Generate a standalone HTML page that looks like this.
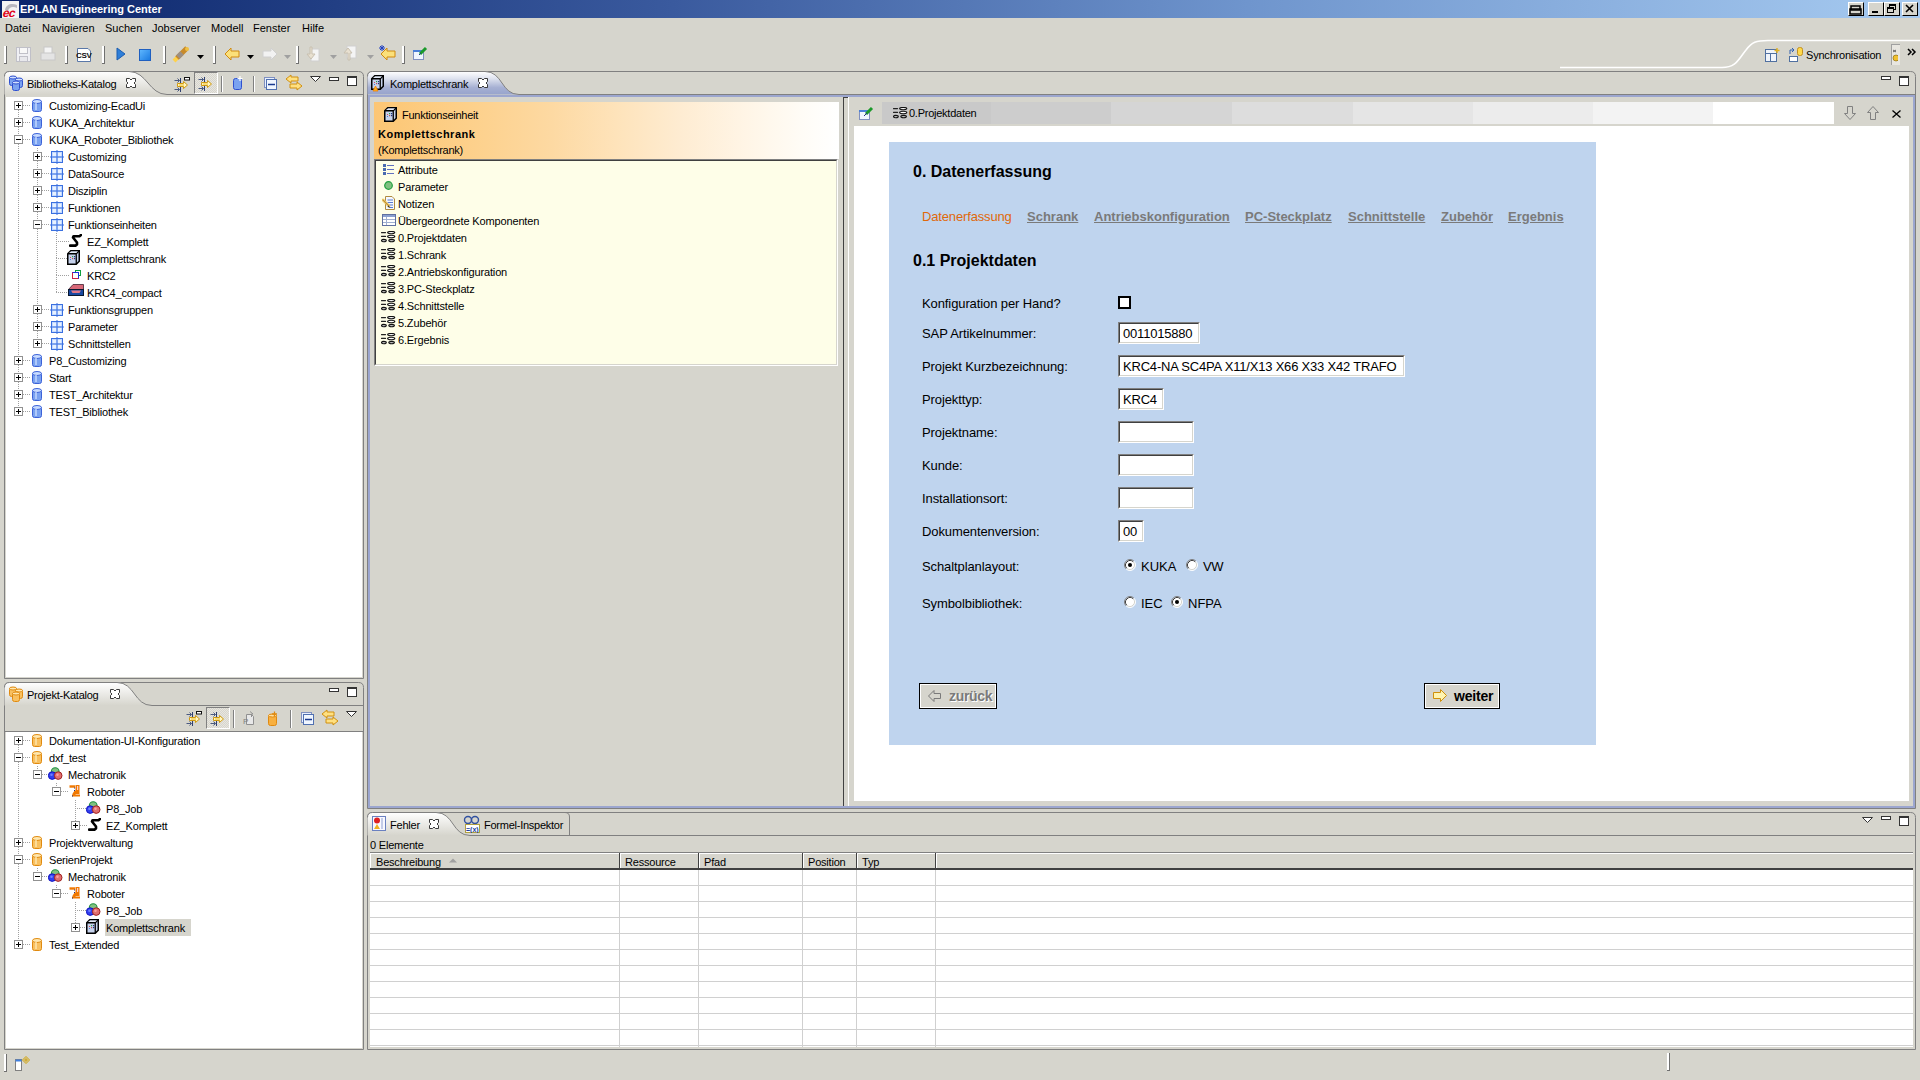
<!DOCTYPE html><html><head><meta charset="utf-8"><style>html,body{margin:0;padding:0;width:1920px;height:1080px;overflow:hidden;background:#d6d5cd;}body{position:relative;font-family:"Liberation Sans",sans-serif;}body>div,body>svg{position:absolute;}.t{white-space:pre;}</style></head><body><div style="left:0px;top:0px;width:1920px;height:18px;background:linear-gradient(to right,#0a246a 0%,#3a5a9e 35%,#6f95cd 65%,#a6caf0 100%)"></div>
<svg style="left:2px;top:1px" width="17" height="17" viewBox="0 0 17 17"><rect x="0" y="0" width="17" height="17" fill="#f4f4f4"/><path d="M3 9 C4 3 10 2 15 4 L15 7 C11 5 7 6 6 10 Z" fill="#b8b8c0"/><g transform="translate(2 0) skewX(-14)"><text x="2" y="16" font-family="Liberation Sans" font-weight="700" font-size="12" fill="#e00018" letter-spacing="-0.6">ec</text></g></svg>
<div class="t" style="left:20px;top:4px;font-size:11px;line-height:11px;color:#fff;font-weight:700;">EPLAN Engineering Center</div>
<div style="left:1848px;top:2px;width:16px;height:14px;background:#d6d5cd;border-top:1px solid #fff;border-left:1px solid #fff;border-right:1px solid #000;border-bottom:1px solid #000;box-sizing:border-box"></div>
<svg style="left:1848px;top:2px" width="16" height="14" viewBox="0 0 16 14"><rect x="3" y="4" width="9" height="4" fill="none" stroke="#000" stroke-width="1.5"/><rect x="2" y="7" width="11" height="5" fill="none" stroke="#000" stroke-width="1.5"/></svg>
<div style="left:1868px;top:2px;width:16px;height:14px;background:#d6d5cd;border-top:1px solid #fff;border-left:1px solid #fff;border-right:1px solid #000;border-bottom:1px solid #000;box-sizing:border-box"></div>
<svg style="left:1868px;top:2px" width="16" height="14" viewBox="0 0 16 14"><rect x="4" y="9" width="6" height="2" fill="#000"/></svg>
<div style="left:1884px;top:2px;width:16px;height:14px;background:#d6d5cd;border-top:1px solid #fff;border-left:1px solid #fff;border-right:1px solid #000;border-bottom:1px solid #000;box-sizing:border-box"></div>
<svg style="left:1884px;top:2px" width="16" height="14" viewBox="0 0 16 14"><rect x="5.5" y="2.5" width="6" height="5" fill="none" stroke="#000"/><rect x="5" y="2" width="7" height="2" fill="#000"/><rect x="3.5" y="5.5" width="6" height="5" fill="#d6d5cd" stroke="#000"/><rect x="3" y="5" width="7" height="2" fill="#000"/></svg>
<div style="left:1902px;top:2px;width:16px;height:14px;background:#d6d5cd;border-top:1px solid #fff;border-left:1px solid #fff;border-right:1px solid #000;border-bottom:1px solid #000;box-sizing:border-box"></div>
<svg style="left:1902px;top:2px" width="16" height="14" viewBox="0 0 16 14"><path d="M4 3 L11 10 M11 3 L4 10" stroke="#000" stroke-width="1.6"/></svg>
<div class="t" style="left:5px;top:23px;font-size:11px;line-height:11px;color:#000;font-weight:400;">Datei</div>
<div class="t" style="left:42px;top:23px;font-size:11px;line-height:11px;color:#000;font-weight:400;">Navigieren</div>
<div class="t" style="left:105px;top:23px;font-size:11px;line-height:11px;color:#000;font-weight:400;">Suchen</div>
<div class="t" style="left:152px;top:23px;font-size:11px;line-height:11px;color:#000;font-weight:400;">Jobserver</div>
<div class="t" style="left:211px;top:23px;font-size:11px;line-height:11px;color:#000;font-weight:400;">Modell</div>
<div class="t" style="left:253px;top:23px;font-size:11px;line-height:11px;color:#000;font-weight:400;">Fenster</div>
<div class="t" style="left:302px;top:23px;font-size:11px;line-height:11px;color:#000;font-weight:400;">Hilfe</div>
<div style="left:4px;top:46px;width:2px;height:18px;background:#fff"></div>
<div style="left:6px;top:46px;width:1px;height:18px;background:#707070"></div>
<div style="left:4px;top:63px;width:3px;height:1px;background:#707070"></div>
<div style="left:65px;top:46px;width:2px;height:18px;background:#fff"></div>
<div style="left:67px;top:46px;width:1px;height:18px;background:#707070"></div>
<div style="left:65px;top:63px;width:3px;height:1px;background:#707070"></div>
<div style="left:102px;top:46px;width:2px;height:18px;background:#fff"></div>
<div style="left:104px;top:46px;width:1px;height:18px;background:#707070"></div>
<div style="left:102px;top:63px;width:3px;height:1px;background:#707070"></div>
<div style="left:163px;top:46px;width:2px;height:18px;background:#fff"></div>
<div style="left:165px;top:46px;width:1px;height:18px;background:#707070"></div>
<div style="left:163px;top:63px;width:3px;height:1px;background:#707070"></div>
<div style="left:213px;top:46px;width:2px;height:18px;background:#fff"></div>
<div style="left:215px;top:46px;width:1px;height:18px;background:#707070"></div>
<div style="left:213px;top:63px;width:3px;height:1px;background:#707070"></div>
<div style="left:296px;top:46px;width:2px;height:18px;background:#fff"></div>
<div style="left:298px;top:46px;width:1px;height:18px;background:#707070"></div>
<div style="left:296px;top:63px;width:3px;height:1px;background:#707070"></div>
<div style="left:402px;top:46px;width:2px;height:18px;background:#fff"></div>
<div style="left:404px;top:46px;width:1px;height:18px;background:#707070"></div>
<div style="left:402px;top:63px;width:3px;height:1px;background:#707070"></div>
<svg style="left:16px;top:47px" width="15" height="15" viewBox="0 0 15 15"><rect x="0.5" y="0.5" width="14" height="14" fill="#f0f0f4" stroke="#c0c0c8"/><rect x="3.5" y="0.5" width="8" height="6" fill="#f8f8f8" stroke="#c0c0c8"/><rect x="3.5" y="9.5" width="8" height="5" fill="#e8e8ec" stroke="#c0c0c8"/></svg>
<svg style="left:40px;top:46px" width="16" height="16" viewBox="0 0 16 16"><rect x="4" y="1" width="8" height="7" fill="#f4f4f4" stroke="#c8c8c8"/><rect x="1" y="7" width="14" height="7" fill="#e4e4e4" stroke="#c8c8c8"/></svg>
<svg style="left:75px;top:46px" width="18" height="17" viewBox="0 0 18 17"><path d="M2.5 2.5 H13 L15.5 5 V15.5 H2.5 Z" fill="#fff" stroke="#5a78a8"/><text x="1" y="12" font-family="Liberation Sans" font-size="8" font-weight="700" fill="#101010" letter-spacing="-0.3">CSV</text></svg>
<svg style="left:115px;top:46px" width="12" height="16" viewBox="0 0 12 16"><path d="M2 2 L10 8 L2 14 Z" fill="#2f7fd8" stroke="#1a5cb0"/></svg>
<svg style="left:139px;top:49px" width="12" height="12" viewBox="0 0 12 12"><defs><linearGradient id="stopg" x1="0" y1="0" x2="1" y2="1"><stop offset="0" stop-color="#60b8ff"/><stop offset="1" stop-color="#1878e0"/></linearGradient></defs><rect x="0.5" y="0.5" width="11" height="11" fill="url(#stopg)" stroke="#2060c0"/></svg>
<svg style="left:172px;top:45px" width="20" height="18" viewBox="0 0 20 18"><path d="M2 16 L6 12" stroke="#ffd24a" stroke-width="4"/><path d="M5 13 L15 3" stroke="#c88a2a" stroke-width="5"/><path d="M6 12 L10 8" stroke="#9a8f86" stroke-width="5"/><circle cx="15" cy="4" r="2" fill="#f0c040"/></svg>
<svg style="left:197px;top:55px" width="7" height="4" viewBox="0 0 7 4"><path d="M0 0 L7 0 L3.5 4 Z" fill="#000"/></svg>
<svg style="left:224px;top:47px" width="16" height="14" viewBox="0 0 16 14"><path d="M1 7 L7 1 L7 4 L15 4 L15 10 L7 10 L7 13 Z" fill="#fbe07a" stroke="#d08a10" stroke-linejoin="round"/></svg>
<svg style="left:247px;top:55px" width="7" height="4" viewBox="0 0 7 4"><path d="M0 0 L7 0 L3.5 4 Z" fill="#000"/></svg>
<svg style="left:262px;top:47px" width="16" height="14" viewBox="0 0 16 14"><path d="M15 7 L9 1 L9 4 L1 4 L1 10 L9 10 L9 13 Z" fill="#f2f2f2" stroke="#d0d0d0" stroke-linejoin="round"/></svg>
<svg style="left:284px;top:55px" width="7" height="4" viewBox="0 0 7 4"><path d="M0 0 L7 0 L3.5 4 Z" fill="#a0a0a0"/></svg>
<svg style="left:306px;top:46px" width="14" height="16" viewBox="0 0 14 16"><rect x="5" y="3" width="8" height="12" fill="#f4f4f4" stroke="#d0d0d0"/><path d="M4 1 L4 8 L1 8 L5 13 L9 8 L6 8 L6 1Z" fill="#e8e0d0" stroke="#c8c0b0"/></svg>
<svg style="left:330px;top:55px" width="7" height="4" viewBox="0 0 7 4"><path d="M0 0 L7 0 L3.5 4 Z" fill="#a0a0a0"/></svg>
<svg style="left:343px;top:45px" width="14" height="16" viewBox="0 0 14 16"><rect x="4" y="1" width="9" height="12" fill="#f4f4f4" stroke="#d0d0d0"/><path d="M5 15 L5 8 L1 8 L5 3 L9 8 L7 8 L7 15Z" fill="#e8e0d0" stroke="#c8c0b0"/></svg>
<svg style="left:367px;top:55px" width="7" height="4" viewBox="0 0 7 4"><path d="M0 0 L7 0 L3.5 4 Z" fill="#a0a0a0"/></svg>
<svg style="left:380px;top:47px" width="16" height="14" viewBox="0 0 16 14"><path d="M1 7 L7 1 L7 4 L15 4 L15 10 L7 10 L7 13 Z" fill="#fbe07a" stroke="#d08a10" stroke-linejoin="round"/></svg>
<svg style="left:379px;top:45px" width="6" height="6" viewBox="0 0 6 6"><path d="M3 0 V6 M0 3 H6 M1 1 L5 5 M5 1 L1 5" stroke="#2040c0" stroke-width="1"/></svg>
<svg style="left:412px;top:45px" width="16" height="16" viewBox="0 0 16 16"><rect x="1.5" y="5.5" width="10" height="9" fill="#f0f6ff" stroke="#8090c0"/><rect x="1" y="5" width="11" height="2" fill="#4a80d8"/><path d="M8 9 L14 3" stroke="#1a9a2a" stroke-width="3"/><path d="M7 10 L9 8" stroke="#204080"/></svg>
<svg style="left:1560px;top:36px" width="360" height="36" viewBox="0 0 360 36"><path d="M0 31.5 L162 31.5 C176 31.5 178 24 186 14 C192 6 196 4.5 208 4.5 L360 4.5" fill="none" stroke="#fff" stroke-width="1.6"/></svg>
<svg style="left:1764px;top:47px" width="16" height="16" viewBox="0 0 16 16"><rect x="1.5" y="2.5" width="11" height="12" fill="#f0f4fa" stroke="#5070a0"/><path d="M1.5 6.5 H12.5 M6.5 6.5 V14.5" stroke="#5070a0"/><path d="M13 1 V6 M10.5 3.5 H15.5" stroke="#e0b020" stroke-width="1.4"/></svg>
<svg style="left:1787px;top:46px" width="18" height="17" viewBox="0 0 18 17"><rect x="2.5" y="10.5" width="8" height="5" fill="#fff" stroke="#5070a0"/><path d="M3 8 V4 L7 4 M5 2 L7 4 L5 6" stroke="#3060b0" fill="none"/><rect x="10.5" y="1.5" width="5" height="8" rx="2" fill="#ffd84a" stroke="#c09020"/></svg>
<div class="t" style="left:1806px;top:50px;font-size:11px;line-height:11px;color:#000;font-weight:400;letter-spacing:-0.2px">Synchronisation</div>
<div style="left:1891px;top:44px;width:8px;height:20px;background:#e8e6e0;border-left:1px solid #a0a0a0;border-top:1px solid #a0a0a0"></div>
<svg style="left:1892px;top:48px" width="6" height="14" viewBox="0 0 6 14"><path d="M1 2 L4 4 M1 4 L4 2" stroke="#444" stroke-width="0.8"/><circle cx="4" cy="10" r="3" fill="#f0c030" stroke="#806000" stroke-width="0.6"/></svg>
<svg style="left:1907px;top:48px" width="10" height="8" viewBox="0 0 10 8"><path d="M1 1 L4 4 L1 7 M5 1 L8 4 L5 7" fill="none" stroke="#000" stroke-width="1.5"/></svg>
<!--panels-->
<svg style="left:4px;top:71px" width="360" height="608" viewBox="0 0 360 608"><defs><linearGradient id="g1" x1="0" y1="0" x2="0" y2="1"><stop offset="0" stop-color="#ffffff"/><stop offset="1" stop-color="#d6d5cd"/></linearGradient></defs><path d="M0.5 607.5 L0.5 5.5 Q0.5 0.5 5.5 0.5 L354.5 0.5 Q359.5 0.5 359.5 5.5 L359.5 607.5 Z" fill="#d6d5cd" stroke="#808080"/><path d="M0.5 23.5 L0.5 5.5 Q0.5 0.5 5.5 0.5 L125 0.5 C143 0.5 145 23.5 163 23.5 Z" fill="url(#g1)"/><path d="M0.5 5.5 Q0.5 0.5 5.5 0.5 L125 0.5 C143 0.5 145 23.5 163 23.5 L359.5 23.5" fill="none" stroke="#808080"/></svg>
<div style="left:6px;top:97px;width:356px;height:580px;background:#fff"></div>
<svg style="left:4px;top:682px" width="360" height="368" viewBox="0 0 360 368"><defs><linearGradient id="g2" x1="0" y1="0" x2="0" y2="1"><stop offset="0" stop-color="#ffffff"/><stop offset="1" stop-color="#d6d5cd"/></linearGradient></defs><path d="M0.5 367.5 L0.5 5.5 Q0.5 0.5 5.5 0.5 L354.5 0.5 Q359.5 0.5 359.5 5.5 L359.5 367.5 Z" fill="#d6d5cd" stroke="#808080"/><path d="M0.5 23.5 L0.5 5.5 Q0.5 0.5 5.5 0.5 L113 0.5 C131 0.5 130 23.5 148 23.5 Z" fill="url(#g2)"/><path d="M0.5 5.5 Q0.5 0.5 5.5 0.5 L113 0.5 C131 0.5 130 23.5 148 23.5 L359.5 23.5" fill="none" stroke="#808080"/></svg>
<div style="left:5px;top:731px;width:358px;height:1px;background:#808080"></div>
<div style="left:6px;top:732px;width:356px;height:316px;background:#fff"></div>
<svg style="left:367px;top:71px" width="1549" height="738" viewBox="0 0 1549 738"><defs><linearGradient id="g3" x1="0" y1="0" x2="0" y2="1"><stop offset="0" stop-color="#ffffff"/><stop offset="0.3" stop-color="#dfe3ef"/><stop offset="0.7" stop-color="#a6b0d3"/><stop offset="1" stop-color="#98a4cc"/></linearGradient></defs><path d="M0.5 737.5 L0.5 5.5 Q0.5 0.5 5.5 0.5 L1543.5 0.5 Q1548.5 0.5 1548.5 5.5 L1548.5 737.5 Z" fill="#d6d5cd" stroke="#808080"/><path d="M0.5 23.5 L0.5 5.5 Q0.5 0.5 5.5 0.5 L118 0.5 C136 0.5 134 23.5 152 23.5 Z" fill="url(#g3)"/><path d="M0.5 5.5 Q0.5 0.5 5.5 0.5 L118 0.5 C136 0.5 134 23.5 152 23.5 L1548.5 23.5" fill="none" stroke="#808080"/></svg>
<svg style="left:367px;top:812px" width="1549" height="238" viewBox="0 0 1549 238"><defs><linearGradient id="g4" x1="0" y1="0" x2="0" y2="1"><stop offset="0" stop-color="#ffffff"/><stop offset="1" stop-color="#d6d5cd"/></linearGradient></defs><path d="M0.5 237.5 L0.5 5.5 Q0.5 0.5 5.5 0.5 L1543.5 0.5 Q1548.5 0.5 1548.5 5.5 L1548.5 237.5 Z" fill="#d6d5cd" stroke="#808080"/><path d="M0.5 23.5 L0.5 5.5 Q0.5 0.5 5.5 0.5 L69 0.5 C87 0.5 85 23.5 103 23.5 Z" fill="url(#g4)"/><path d="M0.5 5.5 Q0.5 0.5 5.5 0.5 L69 0.5 C87 0.5 85 23.5 103 23.5 L1548.5 23.5" fill="none" stroke="#808080"/></svg>
<div style="left:23px;top:105px;width:8px;height:1px;background:repeating-linear-gradient(to right,#a0a0a0 0 1px,transparent 1px 2px)"></div>
<div style="left:18px;top:110px;width:1px;height:8px;background:repeating-linear-gradient(to bottom,#a0a0a0 0 1px,transparent 1px 2px)"></div>
<div style="left:14px;top:101px;width:9px;height:9px;box-sizing:border-box;border:1px solid #919191;background:#fff"></div>
<div style="left:16px;top:105px;width:5px;height:1px;background:#000"></div>
<div style="left:18px;top:103px;width:1px;height:5px;background:#000"></div>
<svg style="left:32px;top:99px" width="10" height="13" viewBox="0 0 10 13"><rect x="0.5" y="1.5" width="9" height="11" rx="2" fill="#7aa2f0" stroke="#3c62d8"/><ellipse cx="5" cy="2.5" rx="4.5" ry="2" fill="#c8dcff" stroke="#3c62d8"/><rect x="3" y="4" width="2" height="7" fill="#c8dcff" opacity="0.7"/></svg>
<div class="t" style="left:49px;top:101px;font-size:11px;line-height:11px;color:#000;font-weight:400;letter-spacing:-0.2px">Customizing-EcadUi</div>
<div style="left:23px;top:122px;width:8px;height:1px;background:repeating-linear-gradient(to right,#a0a0a0 0 1px,transparent 1px 2px)"></div>
<div style="left:18px;top:127px;width:1px;height:8px;background:repeating-linear-gradient(to bottom,#a0a0a0 0 1px,transparent 1px 2px)"></div>
<div style="left:14px;top:118px;width:9px;height:9px;box-sizing:border-box;border:1px solid #919191;background:#fff"></div>
<div style="left:16px;top:122px;width:5px;height:1px;background:#000"></div>
<div style="left:18px;top:120px;width:1px;height:5px;background:#000"></div>
<svg style="left:32px;top:116px" width="10" height="13" viewBox="0 0 10 13"><rect x="0.5" y="1.5" width="9" height="11" rx="2" fill="#7aa2f0" stroke="#3c62d8"/><ellipse cx="5" cy="2.5" rx="4.5" ry="2" fill="#c8dcff" stroke="#3c62d8"/><rect x="3" y="4" width="2" height="7" fill="#c8dcff" opacity="0.7"/></svg>
<div class="t" style="left:49px;top:118px;font-size:11px;line-height:11px;color:#000;font-weight:400;letter-spacing:-0.2px">KUKA_Architektur</div>
<div style="left:23px;top:139px;width:8px;height:1px;background:repeating-linear-gradient(to right,#a0a0a0 0 1px,transparent 1px 2px)"></div>
<div style="left:18px;top:144px;width:1px;height:212px;background:repeating-linear-gradient(to bottom,#a0a0a0 0 1px,transparent 1px 2px)"></div>
<div style="left:14px;top:135px;width:9px;height:9px;box-sizing:border-box;border:1px solid #919191;background:#fff"></div>
<div style="left:16px;top:139px;width:5px;height:1px;background:#000"></div>
<svg style="left:32px;top:133px" width="10" height="13" viewBox="0 0 10 13"><rect x="0.5" y="1.5" width="9" height="11" rx="2" fill="#7aa2f0" stroke="#3c62d8"/><ellipse cx="5" cy="2.5" rx="4.5" ry="2" fill="#c8dcff" stroke="#3c62d8"/><rect x="3" y="4" width="2" height="7" fill="#c8dcff" opacity="0.7"/></svg>
<div class="t" style="left:49px;top:135px;font-size:11px;line-height:11px;color:#000;font-weight:400;letter-spacing:-0.2px">KUKA_Roboter_Bibliothek</div>
<div style="left:42px;top:156px;width:8px;height:1px;background:repeating-linear-gradient(to right,#a0a0a0 0 1px,transparent 1px 2px)"></div>
<div style="left:37px;top:161px;width:1px;height:8px;background:repeating-linear-gradient(to bottom,#a0a0a0 0 1px,transparent 1px 2px)"></div>
<div style="left:37px;top:148px;width:1px;height:4px;background:repeating-linear-gradient(to bottom,#a0a0a0 0 1px,transparent 1px 2px)"></div>
<div style="left:33px;top:152px;width:9px;height:9px;box-sizing:border-box;border:1px solid #919191;background:#fff"></div>
<div style="left:35px;top:156px;width:5px;height:1px;background:#000"></div>
<div style="left:37px;top:154px;width:1px;height:5px;background:#000"></div>
<svg style="left:50px;top:150px" width="14" height="14" viewBox="0 0 14 14"><rect x="1.5" y="1.5" width="11" height="11" fill="#c4daff" stroke="#3a70e0"/><rect x="3" y="3" width="3" height="3" fill="#e8f2ff"/><rect x="8" y="3" width="3" height="3" fill="#e8f2ff"/><rect x="3" y="8" width="3" height="3" fill="#e8f2ff"/><rect x="8" y="8" width="3" height="3" fill="#e8f2ff"/><path d="M7 0 V14 M0 7 H14" stroke="#3a70e0"/></svg>
<div class="t" style="left:68px;top:152px;font-size:11px;line-height:11px;color:#000;font-weight:400;letter-spacing:-0.2px">Customizing</div>
<div style="left:42px;top:173px;width:8px;height:1px;background:repeating-linear-gradient(to right,#a0a0a0 0 1px,transparent 1px 2px)"></div>
<div style="left:37px;top:178px;width:1px;height:8px;background:repeating-linear-gradient(to bottom,#a0a0a0 0 1px,transparent 1px 2px)"></div>
<div style="left:33px;top:169px;width:9px;height:9px;box-sizing:border-box;border:1px solid #919191;background:#fff"></div>
<div style="left:35px;top:173px;width:5px;height:1px;background:#000"></div>
<div style="left:37px;top:171px;width:1px;height:5px;background:#000"></div>
<svg style="left:50px;top:167px" width="14" height="14" viewBox="0 0 14 14"><rect x="1.5" y="1.5" width="11" height="11" fill="#c4daff" stroke="#3a70e0"/><rect x="3" y="3" width="3" height="3" fill="#e8f2ff"/><rect x="8" y="3" width="3" height="3" fill="#e8f2ff"/><rect x="3" y="8" width="3" height="3" fill="#e8f2ff"/><rect x="8" y="8" width="3" height="3" fill="#e8f2ff"/><path d="M7 0 V14 M0 7 H14" stroke="#3a70e0"/></svg>
<div class="t" style="left:68px;top:169px;font-size:11px;line-height:11px;color:#000;font-weight:400;letter-spacing:-0.2px">DataSource</div>
<div style="left:42px;top:190px;width:8px;height:1px;background:repeating-linear-gradient(to right,#a0a0a0 0 1px,transparent 1px 2px)"></div>
<div style="left:37px;top:195px;width:1px;height:8px;background:repeating-linear-gradient(to bottom,#a0a0a0 0 1px,transparent 1px 2px)"></div>
<div style="left:33px;top:186px;width:9px;height:9px;box-sizing:border-box;border:1px solid #919191;background:#fff"></div>
<div style="left:35px;top:190px;width:5px;height:1px;background:#000"></div>
<div style="left:37px;top:188px;width:1px;height:5px;background:#000"></div>
<svg style="left:50px;top:184px" width="14" height="14" viewBox="0 0 14 14"><rect x="1.5" y="1.5" width="11" height="11" fill="#c4daff" stroke="#3a70e0"/><rect x="3" y="3" width="3" height="3" fill="#e8f2ff"/><rect x="8" y="3" width="3" height="3" fill="#e8f2ff"/><rect x="3" y="8" width="3" height="3" fill="#e8f2ff"/><rect x="8" y="8" width="3" height="3" fill="#e8f2ff"/><path d="M7 0 V14 M0 7 H14" stroke="#3a70e0"/></svg>
<div class="t" style="left:68px;top:186px;font-size:11px;line-height:11px;color:#000;font-weight:400;letter-spacing:-0.2px">Disziplin</div>
<div style="left:42px;top:207px;width:8px;height:1px;background:repeating-linear-gradient(to right,#a0a0a0 0 1px,transparent 1px 2px)"></div>
<div style="left:37px;top:212px;width:1px;height:8px;background:repeating-linear-gradient(to bottom,#a0a0a0 0 1px,transparent 1px 2px)"></div>
<div style="left:33px;top:203px;width:9px;height:9px;box-sizing:border-box;border:1px solid #919191;background:#fff"></div>
<div style="left:35px;top:207px;width:5px;height:1px;background:#000"></div>
<div style="left:37px;top:205px;width:1px;height:5px;background:#000"></div>
<svg style="left:50px;top:201px" width="14" height="14" viewBox="0 0 14 14"><rect x="1.5" y="1.5" width="11" height="11" fill="#c4daff" stroke="#3a70e0"/><rect x="3" y="3" width="3" height="3" fill="#e8f2ff"/><rect x="8" y="3" width="3" height="3" fill="#e8f2ff"/><rect x="3" y="8" width="3" height="3" fill="#e8f2ff"/><rect x="8" y="8" width="3" height="3" fill="#e8f2ff"/><path d="M7 0 V14 M0 7 H14" stroke="#3a70e0"/></svg>
<div class="t" style="left:68px;top:203px;font-size:11px;line-height:11px;color:#000;font-weight:400;letter-spacing:-0.2px">Funktionen</div>
<div style="left:42px;top:224px;width:8px;height:1px;background:repeating-linear-gradient(to right,#a0a0a0 0 1px,transparent 1px 2px)"></div>
<div style="left:37px;top:229px;width:1px;height:76px;background:repeating-linear-gradient(to bottom,#a0a0a0 0 1px,transparent 1px 2px)"></div>
<div style="left:33px;top:220px;width:9px;height:9px;box-sizing:border-box;border:1px solid #919191;background:#fff"></div>
<div style="left:35px;top:224px;width:5px;height:1px;background:#000"></div>
<svg style="left:50px;top:218px" width="14" height="14" viewBox="0 0 14 14"><rect x="1.5" y="1.5" width="11" height="11" fill="#c4daff" stroke="#3a70e0"/><rect x="3" y="3" width="3" height="3" fill="#e8f2ff"/><rect x="8" y="3" width="3" height="3" fill="#e8f2ff"/><rect x="3" y="8" width="3" height="3" fill="#e8f2ff"/><rect x="8" y="8" width="3" height="3" fill="#e8f2ff"/><path d="M7 0 V14 M0 7 H14" stroke="#3a70e0"/></svg>
<div class="t" style="left:68px;top:220px;font-size:11px;line-height:11px;color:#000;font-weight:400;letter-spacing:-0.2px">Funktionseinheiten</div>
<div style="left:56px;top:241px;width:13px;height:1px;background:repeating-linear-gradient(to right,#a0a0a0 0 1px,transparent 1px 2px)"></div>
<div style="left:56px;top:241px;width:1px;height:18px;background:repeating-linear-gradient(to bottom,#a0a0a0 0 1px,transparent 1px 2px)"></div>
<div style="left:56px;top:233px;width:1px;height:9px;background:repeating-linear-gradient(to bottom,#a0a0a0 0 1px,transparent 1px 2px)"></div>
<svg style="left:69px;top:234px" width="13" height="13" viewBox="0 0 13 13"><path d="M12 1 L10.5 2.2 L4.5 2.2 L4 3.5 L8 8.5 L8 10.5 L6.5 11.6 L1 11.6" fill="none" stroke="#000" stroke-width="2.6" stroke-linejoin="round" stroke-linecap="round"/></svg>
<div class="t" style="left:87px;top:237px;font-size:11px;line-height:11px;color:#000;font-weight:400;letter-spacing:-0.2px">EZ_Komplett</div>
<div style="left:56px;top:258px;width:13px;height:1px;background:repeating-linear-gradient(to right,#a0a0a0 0 1px,transparent 1px 2px)"></div>
<div style="left:56px;top:258px;width:1px;height:18px;background:repeating-linear-gradient(to bottom,#a0a0a0 0 1px,transparent 1px 2px)"></div>
<svg style="left:67px;top:250px" width="13" height="15" viewBox="0 0 13 15"><path d="M0.75 3.75 L3.75 0.75 L12.25 0.75 L12.25 11.25 L9.25 14.25 L0.75 14.25 Z" fill="#c6d2ec" stroke="#000" stroke-width="1.5"/><path d="M1 3.75 L9.25 3.75 L12 1 M9.25 3.75 L9.25 14" fill="none" stroke="#000" stroke-width="1.3"/><path d="M2 2.9 L4 1.5 L11 1.5 L9 2.9 Z" fill="#e4ecf8"/><rect x="3" y="7" width="1" height="1" fill="#d05050"/><rect x="5" y="6" width="1.2" height="1.2" fill="#30a040"/><rect x="7" y="6" width="1.2" height="1.2" fill="#203080"/><rect x="3" y="9" width="1" height="1" fill="#5080d0"/><rect x="5" y="8" width="1.2" height="1.2" fill="#c05050"/><rect x="7" y="8" width="1.2" height="1.2" fill="#203080"/></svg>
<div class="t" style="left:87px;top:254px;font-size:11px;line-height:11px;color:#000;font-weight:400;letter-spacing:-0.2px">Komplettschrank</div>
<div style="left:56px;top:275px;width:13px;height:1px;background:repeating-linear-gradient(to right,#a0a0a0 0 1px,transparent 1px 2px)"></div>
<div style="left:56px;top:275px;width:1px;height:18px;background:repeating-linear-gradient(to bottom,#a0a0a0 0 1px,transparent 1px 2px)"></div>
<svg style="left:72px;top:270px" width="9" height="9" viewBox="0 0 9 9"><rect x="3.5" y="0.5" width="5" height="5" fill="none" stroke="#10a040"/><rect x="0.5" y="2.5" width="6" height="6" fill="#fff" stroke="#2030e0"/><path d="M0.5 2.5 V8.5 H6.5" fill="none" stroke="#d02040"/></svg>
<div class="t" style="left:87px;top:271px;font-size:11px;line-height:11px;color:#000;font-weight:400;letter-spacing:-0.2px">KRC2</div>
<div style="left:56px;top:292px;width:13px;height:1px;background:repeating-linear-gradient(to right,#a0a0a0 0 1px,transparent 1px 2px)"></div>
<svg style="left:68px;top:284px" width="16" height="12" viewBox="0 0 16 12"><path d="M0.5 5.5 L5 0.5 L15.5 0.5 L15.5 5.5 Z" fill="#d86878" stroke="#402030" stroke-width="0.8"/><rect x="0.5" y="5.5" width="15" height="6" fill="#1848a0" stroke="#081830"/><path d="M3 6.5 L13 6.5 L11.5 9 L4.5 9 Z" fill="#e07888"/></svg>
<div class="t" style="left:87px;top:288px;font-size:11px;line-height:11px;color:#000;font-weight:400;letter-spacing:-0.2px">KRC4_compact</div>
<div style="left:42px;top:309px;width:8px;height:1px;background:repeating-linear-gradient(to right,#a0a0a0 0 1px,transparent 1px 2px)"></div>
<div style="left:37px;top:314px;width:1px;height:8px;background:repeating-linear-gradient(to bottom,#a0a0a0 0 1px,transparent 1px 2px)"></div>
<div style="left:33px;top:305px;width:9px;height:9px;box-sizing:border-box;border:1px solid #919191;background:#fff"></div>
<div style="left:35px;top:309px;width:5px;height:1px;background:#000"></div>
<div style="left:37px;top:307px;width:1px;height:5px;background:#000"></div>
<svg style="left:50px;top:303px" width="14" height="14" viewBox="0 0 14 14"><rect x="1.5" y="1.5" width="11" height="11" fill="#c4daff" stroke="#3a70e0"/><rect x="3" y="3" width="3" height="3" fill="#e8f2ff"/><rect x="8" y="3" width="3" height="3" fill="#e8f2ff"/><rect x="3" y="8" width="3" height="3" fill="#e8f2ff"/><rect x="8" y="8" width="3" height="3" fill="#e8f2ff"/><path d="M7 0 V14 M0 7 H14" stroke="#3a70e0"/></svg>
<div class="t" style="left:68px;top:305px;font-size:11px;line-height:11px;color:#000;font-weight:400;letter-spacing:-0.2px">Funktionsgruppen</div>
<div style="left:42px;top:326px;width:8px;height:1px;background:repeating-linear-gradient(to right,#a0a0a0 0 1px,transparent 1px 2px)"></div>
<div style="left:37px;top:331px;width:1px;height:8px;background:repeating-linear-gradient(to bottom,#a0a0a0 0 1px,transparent 1px 2px)"></div>
<div style="left:33px;top:322px;width:9px;height:9px;box-sizing:border-box;border:1px solid #919191;background:#fff"></div>
<div style="left:35px;top:326px;width:5px;height:1px;background:#000"></div>
<div style="left:37px;top:324px;width:1px;height:5px;background:#000"></div>
<svg style="left:50px;top:320px" width="14" height="14" viewBox="0 0 14 14"><rect x="1.5" y="1.5" width="11" height="11" fill="#c4daff" stroke="#3a70e0"/><rect x="3" y="3" width="3" height="3" fill="#e8f2ff"/><rect x="8" y="3" width="3" height="3" fill="#e8f2ff"/><rect x="3" y="8" width="3" height="3" fill="#e8f2ff"/><rect x="8" y="8" width="3" height="3" fill="#e8f2ff"/><path d="M7 0 V14 M0 7 H14" stroke="#3a70e0"/></svg>
<div class="t" style="left:68px;top:322px;font-size:11px;line-height:11px;color:#000;font-weight:400;letter-spacing:-0.2px">Parameter</div>
<div style="left:42px;top:343px;width:8px;height:1px;background:repeating-linear-gradient(to right,#a0a0a0 0 1px,transparent 1px 2px)"></div>
<div style="left:33px;top:339px;width:9px;height:9px;box-sizing:border-box;border:1px solid #919191;background:#fff"></div>
<div style="left:35px;top:343px;width:5px;height:1px;background:#000"></div>
<div style="left:37px;top:341px;width:1px;height:5px;background:#000"></div>
<svg style="left:50px;top:337px" width="14" height="14" viewBox="0 0 14 14"><rect x="1.5" y="1.5" width="11" height="11" fill="#c4daff" stroke="#3a70e0"/><rect x="3" y="3" width="3" height="3" fill="#e8f2ff"/><rect x="8" y="3" width="3" height="3" fill="#e8f2ff"/><rect x="3" y="8" width="3" height="3" fill="#e8f2ff"/><rect x="8" y="8" width="3" height="3" fill="#e8f2ff"/><path d="M7 0 V14 M0 7 H14" stroke="#3a70e0"/></svg>
<div class="t" style="left:68px;top:339px;font-size:11px;line-height:11px;color:#000;font-weight:400;letter-spacing:-0.2px">Schnittstellen</div>
<div style="left:23px;top:360px;width:8px;height:1px;background:repeating-linear-gradient(to right,#a0a0a0 0 1px,transparent 1px 2px)"></div>
<div style="left:18px;top:365px;width:1px;height:8px;background:repeating-linear-gradient(to bottom,#a0a0a0 0 1px,transparent 1px 2px)"></div>
<div style="left:14px;top:356px;width:9px;height:9px;box-sizing:border-box;border:1px solid #919191;background:#fff"></div>
<div style="left:16px;top:360px;width:5px;height:1px;background:#000"></div>
<div style="left:18px;top:358px;width:1px;height:5px;background:#000"></div>
<svg style="left:32px;top:354px" width="10" height="13" viewBox="0 0 10 13"><rect x="0.5" y="1.5" width="9" height="11" rx="2" fill="#7aa2f0" stroke="#3c62d8"/><ellipse cx="5" cy="2.5" rx="4.5" ry="2" fill="#c8dcff" stroke="#3c62d8"/><rect x="3" y="4" width="2" height="7" fill="#c8dcff" opacity="0.7"/></svg>
<div class="t" style="left:49px;top:356px;font-size:11px;line-height:11px;color:#000;font-weight:400;letter-spacing:-0.2px">P8_Customizing</div>
<div style="left:23px;top:377px;width:8px;height:1px;background:repeating-linear-gradient(to right,#a0a0a0 0 1px,transparent 1px 2px)"></div>
<div style="left:18px;top:382px;width:1px;height:8px;background:repeating-linear-gradient(to bottom,#a0a0a0 0 1px,transparent 1px 2px)"></div>
<div style="left:14px;top:373px;width:9px;height:9px;box-sizing:border-box;border:1px solid #919191;background:#fff"></div>
<div style="left:16px;top:377px;width:5px;height:1px;background:#000"></div>
<div style="left:18px;top:375px;width:1px;height:5px;background:#000"></div>
<svg style="left:32px;top:371px" width="10" height="13" viewBox="0 0 10 13"><rect x="0.5" y="1.5" width="9" height="11" rx="2" fill="#7aa2f0" stroke="#3c62d8"/><ellipse cx="5" cy="2.5" rx="4.5" ry="2" fill="#c8dcff" stroke="#3c62d8"/><rect x="3" y="4" width="2" height="7" fill="#c8dcff" opacity="0.7"/></svg>
<div class="t" style="left:49px;top:373px;font-size:11px;line-height:11px;color:#000;font-weight:400;letter-spacing:-0.2px">Start</div>
<div style="left:23px;top:394px;width:8px;height:1px;background:repeating-linear-gradient(to right,#a0a0a0 0 1px,transparent 1px 2px)"></div>
<div style="left:18px;top:399px;width:1px;height:8px;background:repeating-linear-gradient(to bottom,#a0a0a0 0 1px,transparent 1px 2px)"></div>
<div style="left:14px;top:390px;width:9px;height:9px;box-sizing:border-box;border:1px solid #919191;background:#fff"></div>
<div style="left:16px;top:394px;width:5px;height:1px;background:#000"></div>
<div style="left:18px;top:392px;width:1px;height:5px;background:#000"></div>
<svg style="left:32px;top:388px" width="10" height="13" viewBox="0 0 10 13"><rect x="0.5" y="1.5" width="9" height="11" rx="2" fill="#7aa2f0" stroke="#3c62d8"/><ellipse cx="5" cy="2.5" rx="4.5" ry="2" fill="#c8dcff" stroke="#3c62d8"/><rect x="3" y="4" width="2" height="7" fill="#c8dcff" opacity="0.7"/></svg>
<div class="t" style="left:49px;top:390px;font-size:11px;line-height:11px;color:#000;font-weight:400;letter-spacing:-0.2px">TEST_Architektur</div>
<div style="left:23px;top:411px;width:8px;height:1px;background:repeating-linear-gradient(to right,#a0a0a0 0 1px,transparent 1px 2px)"></div>
<div style="left:14px;top:407px;width:9px;height:9px;box-sizing:border-box;border:1px solid #919191;background:#fff"></div>
<div style="left:16px;top:411px;width:5px;height:1px;background:#000"></div>
<div style="left:18px;top:409px;width:1px;height:5px;background:#000"></div>
<svg style="left:32px;top:405px" width="10" height="13" viewBox="0 0 10 13"><rect x="0.5" y="1.5" width="9" height="11" rx="2" fill="#7aa2f0" stroke="#3c62d8"/><ellipse cx="5" cy="2.5" rx="4.5" ry="2" fill="#c8dcff" stroke="#3c62d8"/><rect x="3" y="4" width="2" height="7" fill="#c8dcff" opacity="0.7"/></svg>
<div class="t" style="left:49px;top:407px;font-size:11px;line-height:11px;color:#000;font-weight:400;letter-spacing:-0.2px">TEST_Bibliothek</div>
<div style="left:23px;top:740px;width:8px;height:1px;background:repeating-linear-gradient(to right,#a0a0a0 0 1px,transparent 1px 2px)"></div>
<div style="left:18px;top:745px;width:1px;height:8px;background:repeating-linear-gradient(to bottom,#a0a0a0 0 1px,transparent 1px 2px)"></div>
<div style="left:14px;top:736px;width:9px;height:9px;box-sizing:border-box;border:1px solid #919191;background:#fff"></div>
<div style="left:16px;top:740px;width:5px;height:1px;background:#000"></div>
<div style="left:18px;top:738px;width:1px;height:5px;background:#000"></div>
<svg style="left:32px;top:734px" width="10" height="13" viewBox="0 0 10 13"><rect x="0.5" y="1.5" width="9" height="11" rx="2" fill="#f8c060" stroke="#e08a10"/><ellipse cx="5" cy="2.5" rx="4.5" ry="2" fill="#ffe8b0" stroke="#e08a10"/><rect x="3" y="4" width="2" height="7" fill="#ffe8b0" opacity="0.7"/></svg>
<div class="t" style="left:49px;top:736px;font-size:11px;line-height:11px;color:#000;font-weight:400;letter-spacing:-0.2px">Dokumentation-UI-Konfiguration</div>
<div style="left:23px;top:757px;width:8px;height:1px;background:repeating-linear-gradient(to right,#a0a0a0 0 1px,transparent 1px 2px)"></div>
<div style="left:18px;top:762px;width:1px;height:76px;background:repeating-linear-gradient(to bottom,#a0a0a0 0 1px,transparent 1px 2px)"></div>
<div style="left:14px;top:753px;width:9px;height:9px;box-sizing:border-box;border:1px solid #919191;background:#fff"></div>
<div style="left:16px;top:757px;width:5px;height:1px;background:#000"></div>
<svg style="left:32px;top:751px" width="10" height="13" viewBox="0 0 10 13"><rect x="0.5" y="1.5" width="9" height="11" rx="2" fill="#f8c060" stroke="#e08a10"/><ellipse cx="5" cy="2.5" rx="4.5" ry="2" fill="#ffe8b0" stroke="#e08a10"/><rect x="3" y="4" width="2" height="7" fill="#ffe8b0" opacity="0.7"/></svg>
<div class="t" style="left:49px;top:753px;font-size:11px;line-height:11px;color:#000;font-weight:400;letter-spacing:-0.2px">dxf_test</div>
<div style="left:42px;top:774px;width:8px;height:1px;background:repeating-linear-gradient(to right,#a0a0a0 0 1px,transparent 1px 2px)"></div>
<div style="left:37px;top:766px;width:1px;height:4px;background:repeating-linear-gradient(to bottom,#a0a0a0 0 1px,transparent 1px 2px)"></div>
<div style="left:33px;top:770px;width:9px;height:9px;box-sizing:border-box;border:1px solid #919191;background:#fff"></div>
<div style="left:35px;top:774px;width:5px;height:1px;background:#000"></div>
<svg style="left:48px;top:767px" width="15" height="13" viewBox="0 0 15 13"><circle cx="7.2" cy="4.6" r="3.9" fill="#80c080" stroke="#209040" stroke-width="1.1"/><circle cx="4.2" cy="8.6" r="3.8" fill="#3040f0" stroke="#1010c0" stroke-width="1"/><circle cx="10.2" cy="8.6" r="3.8" fill="#e07070" stroke="#a02020" stroke-width="1"/><circle cx="3.5" cy="7.8" r="1.3" fill="#7080ff"/><circle cx="9.5" cy="7.8" r="1.2" fill="#ffa0a0"/></svg>
<div class="t" style="left:68px;top:770px;font-size:11px;line-height:11px;color:#000;font-weight:400;letter-spacing:-0.2px">Mechatronik</div>
<div style="left:61px;top:791px;width:8px;height:1px;background:repeating-linear-gradient(to right,#a0a0a0 0 1px,transparent 1px 2px)"></div>
<div style="left:56px;top:783px;width:1px;height:4px;background:repeating-linear-gradient(to bottom,#a0a0a0 0 1px,transparent 1px 2px)"></div>
<div style="left:52px;top:787px;width:9px;height:9px;box-sizing:border-box;border:1px solid #919191;background:#fff"></div>
<div style="left:54px;top:791px;width:5px;height:1px;background:#000"></div>
<svg style="left:69px;top:785px" width="12" height="12" viewBox="0 0 12 12"><path d="M0.5 1.5 H6" stroke="#f07800" stroke-width="2.4"/><rect x="6.5" y="0" width="4" height="9" fill="#f07800"/><rect x="8" y="1" width="1.2" height="4" fill="#ffd0d0"/><path d="M7 6 L4.5 10" stroke="#f07800" stroke-width="3"/><rect x="3" y="9.5" width="8" height="2" fill="#f07800"/><rect x="5" y="2.5" width="1" height="1" fill="#203080"/><rect x="5" y="5" width="1" height="1" fill="#203080"/><rect x="3" y="10.5" width="1" height="1" fill="#203080"/></svg>
<div class="t" style="left:87px;top:787px;font-size:11px;line-height:11px;color:#000;font-weight:400;letter-spacing:-0.2px">Roboter</div>
<div style="left:75px;top:808px;width:13px;height:1px;background:repeating-linear-gradient(to right,#a0a0a0 0 1px,transparent 1px 2px)"></div>
<div style="left:75px;top:808px;width:1px;height:13px;background:repeating-linear-gradient(to bottom,#a0a0a0 0 1px,transparent 1px 2px)"></div>
<div style="left:75px;top:800px;width:1px;height:9px;background:repeating-linear-gradient(to bottom,#a0a0a0 0 1px,transparent 1px 2px)"></div>
<svg style="left:86px;top:801px" width="15" height="13" viewBox="0 0 15 13"><circle cx="7.2" cy="4.6" r="3.9" fill="#80c080" stroke="#209040" stroke-width="1.1"/><circle cx="4.2" cy="8.6" r="3.8" fill="#3040f0" stroke="#1010c0" stroke-width="1"/><circle cx="10.2" cy="8.6" r="3.8" fill="#e07070" stroke="#a02020" stroke-width="1"/><circle cx="3.5" cy="7.8" r="1.3" fill="#7080ff"/><circle cx="9.5" cy="7.8" r="1.2" fill="#ffa0a0"/></svg>
<div class="t" style="left:106px;top:804px;font-size:11px;line-height:11px;color:#000;font-weight:400;letter-spacing:-0.2px">P8_Job</div>
<div style="left:80px;top:825px;width:8px;height:1px;background:repeating-linear-gradient(to right,#a0a0a0 0 1px,transparent 1px 2px)"></div>
<div style="left:71px;top:821px;width:9px;height:9px;box-sizing:border-box;border:1px solid #919191;background:#fff"></div>
<div style="left:73px;top:825px;width:5px;height:1px;background:#000"></div>
<div style="left:75px;top:823px;width:1px;height:5px;background:#000"></div>
<svg style="left:88px;top:818px" width="13" height="13" viewBox="0 0 13 13"><path d="M12 1 L10.5 2.2 L4.5 2.2 L4 3.5 L8 8.5 L8 10.5 L6.5 11.6 L1 11.6" fill="none" stroke="#000" stroke-width="2.6" stroke-linejoin="round" stroke-linecap="round"/></svg>
<div class="t" style="left:106px;top:821px;font-size:11px;line-height:11px;color:#000;font-weight:400;letter-spacing:-0.2px">EZ_Komplett</div>
<div style="left:23px;top:842px;width:8px;height:1px;background:repeating-linear-gradient(to right,#a0a0a0 0 1px,transparent 1px 2px)"></div>
<div style="left:18px;top:847px;width:1px;height:8px;background:repeating-linear-gradient(to bottom,#a0a0a0 0 1px,transparent 1px 2px)"></div>
<div style="left:14px;top:838px;width:9px;height:9px;box-sizing:border-box;border:1px solid #919191;background:#fff"></div>
<div style="left:16px;top:842px;width:5px;height:1px;background:#000"></div>
<div style="left:18px;top:840px;width:1px;height:5px;background:#000"></div>
<svg style="left:32px;top:836px" width="10" height="13" viewBox="0 0 10 13"><rect x="0.5" y="1.5" width="9" height="11" rx="2" fill="#f8c060" stroke="#e08a10"/><ellipse cx="5" cy="2.5" rx="4.5" ry="2" fill="#ffe8b0" stroke="#e08a10"/><rect x="3" y="4" width="2" height="7" fill="#ffe8b0" opacity="0.7"/></svg>
<div class="t" style="left:49px;top:838px;font-size:11px;line-height:11px;color:#000;font-weight:400;letter-spacing:-0.2px">Projektverwaltung</div>
<div style="left:23px;top:859px;width:8px;height:1px;background:repeating-linear-gradient(to right,#a0a0a0 0 1px,transparent 1px 2px)"></div>
<div style="left:18px;top:864px;width:1px;height:76px;background:repeating-linear-gradient(to bottom,#a0a0a0 0 1px,transparent 1px 2px)"></div>
<div style="left:14px;top:855px;width:9px;height:9px;box-sizing:border-box;border:1px solid #919191;background:#fff"></div>
<div style="left:16px;top:859px;width:5px;height:1px;background:#000"></div>
<svg style="left:32px;top:853px" width="10" height="13" viewBox="0 0 10 13"><rect x="0.5" y="1.5" width="9" height="11" rx="2" fill="#f8c060" stroke="#e08a10"/><ellipse cx="5" cy="2.5" rx="4.5" ry="2" fill="#ffe8b0" stroke="#e08a10"/><rect x="3" y="4" width="2" height="7" fill="#ffe8b0" opacity="0.7"/></svg>
<div class="t" style="left:49px;top:855px;font-size:11px;line-height:11px;color:#000;font-weight:400;letter-spacing:-0.2px">SerienProjekt</div>
<div style="left:42px;top:876px;width:8px;height:1px;background:repeating-linear-gradient(to right,#a0a0a0 0 1px,transparent 1px 2px)"></div>
<div style="left:37px;top:868px;width:1px;height:4px;background:repeating-linear-gradient(to bottom,#a0a0a0 0 1px,transparent 1px 2px)"></div>
<div style="left:33px;top:872px;width:9px;height:9px;box-sizing:border-box;border:1px solid #919191;background:#fff"></div>
<div style="left:35px;top:876px;width:5px;height:1px;background:#000"></div>
<svg style="left:48px;top:869px" width="15" height="13" viewBox="0 0 15 13"><circle cx="7.2" cy="4.6" r="3.9" fill="#80c080" stroke="#209040" stroke-width="1.1"/><circle cx="4.2" cy="8.6" r="3.8" fill="#3040f0" stroke="#1010c0" stroke-width="1"/><circle cx="10.2" cy="8.6" r="3.8" fill="#e07070" stroke="#a02020" stroke-width="1"/><circle cx="3.5" cy="7.8" r="1.3" fill="#7080ff"/><circle cx="9.5" cy="7.8" r="1.2" fill="#ffa0a0"/></svg>
<div class="t" style="left:68px;top:872px;font-size:11px;line-height:11px;color:#000;font-weight:400;letter-spacing:-0.2px">Mechatronik</div>
<div style="left:61px;top:893px;width:8px;height:1px;background:repeating-linear-gradient(to right,#a0a0a0 0 1px,transparent 1px 2px)"></div>
<div style="left:56px;top:885px;width:1px;height:4px;background:repeating-linear-gradient(to bottom,#a0a0a0 0 1px,transparent 1px 2px)"></div>
<div style="left:52px;top:889px;width:9px;height:9px;box-sizing:border-box;border:1px solid #919191;background:#fff"></div>
<div style="left:54px;top:893px;width:5px;height:1px;background:#000"></div>
<svg style="left:69px;top:887px" width="12" height="12" viewBox="0 0 12 12"><path d="M0.5 1.5 H6" stroke="#f07800" stroke-width="2.4"/><rect x="6.5" y="0" width="4" height="9" fill="#f07800"/><rect x="8" y="1" width="1.2" height="4" fill="#ffd0d0"/><path d="M7 6 L4.5 10" stroke="#f07800" stroke-width="3"/><rect x="3" y="9.5" width="8" height="2" fill="#f07800"/><rect x="5" y="2.5" width="1" height="1" fill="#203080"/><rect x="5" y="5" width="1" height="1" fill="#203080"/><rect x="3" y="10.5" width="1" height="1" fill="#203080"/></svg>
<div class="t" style="left:87px;top:889px;font-size:11px;line-height:11px;color:#000;font-weight:400;letter-spacing:-0.2px">Roboter</div>
<div style="left:75px;top:910px;width:13px;height:1px;background:repeating-linear-gradient(to right,#a0a0a0 0 1px,transparent 1px 2px)"></div>
<div style="left:75px;top:910px;width:1px;height:13px;background:repeating-linear-gradient(to bottom,#a0a0a0 0 1px,transparent 1px 2px)"></div>
<div style="left:75px;top:902px;width:1px;height:9px;background:repeating-linear-gradient(to bottom,#a0a0a0 0 1px,transparent 1px 2px)"></div>
<svg style="left:86px;top:903px" width="15" height="13" viewBox="0 0 15 13"><circle cx="7.2" cy="4.6" r="3.9" fill="#80c080" stroke="#209040" stroke-width="1.1"/><circle cx="4.2" cy="8.6" r="3.8" fill="#3040f0" stroke="#1010c0" stroke-width="1"/><circle cx="10.2" cy="8.6" r="3.8" fill="#e07070" stroke="#a02020" stroke-width="1"/><circle cx="3.5" cy="7.8" r="1.3" fill="#7080ff"/><circle cx="9.5" cy="7.8" r="1.2" fill="#ffa0a0"/></svg>
<div class="t" style="left:106px;top:906px;font-size:11px;line-height:11px;color:#000;font-weight:400;letter-spacing:-0.2px">P8_Job</div>
<div style="left:80px;top:927px;width:8px;height:1px;background:repeating-linear-gradient(to right,#a0a0a0 0 1px,transparent 1px 2px)"></div>
<div style="left:71px;top:923px;width:9px;height:9px;box-sizing:border-box;border:1px solid #919191;background:#fff"></div>
<div style="left:73px;top:927px;width:5px;height:1px;background:#000"></div>
<div style="left:75px;top:925px;width:1px;height:5px;background:#000"></div>
<svg style="left:86px;top:919px" width="13" height="15" viewBox="0 0 13 15"><path d="M0.75 3.75 L3.75 0.75 L12.25 0.75 L12.25 11.25 L9.25 14.25 L0.75 14.25 Z" fill="#c6d2ec" stroke="#000" stroke-width="1.5"/><path d="M1 3.75 L9.25 3.75 L12 1 M9.25 3.75 L9.25 14" fill="none" stroke="#000" stroke-width="1.3"/><path d="M2 2.9 L4 1.5 L11 1.5 L9 2.9 Z" fill="#e4ecf8"/><rect x="3" y="7" width="1" height="1" fill="#d05050"/><rect x="5" y="6" width="1.2" height="1.2" fill="#30a040"/><rect x="7" y="6" width="1.2" height="1.2" fill="#203080"/><rect x="3" y="9" width="1" height="1" fill="#5080d0"/><rect x="5" y="8" width="1.2" height="1.2" fill="#c05050"/><rect x="7" y="8" width="1.2" height="1.2" fill="#203080"/></svg>
<div style="left:105px;top:919px;width:86px;height:17px;background:#d6d5cd"></div>
<div class="t" style="left:106px;top:923px;font-size:11px;line-height:11px;color:#000;font-weight:400;letter-spacing:-0.2px">Komplettschrank</div>
<div style="left:23px;top:944px;width:8px;height:1px;background:repeating-linear-gradient(to right,#a0a0a0 0 1px,transparent 1px 2px)"></div>
<div style="left:14px;top:940px;width:9px;height:9px;box-sizing:border-box;border:1px solid #919191;background:#fff"></div>
<div style="left:16px;top:944px;width:5px;height:1px;background:#000"></div>
<div style="left:18px;top:942px;width:1px;height:5px;background:#000"></div>
<svg style="left:32px;top:938px" width="10" height="13" viewBox="0 0 10 13"><rect x="0.5" y="1.5" width="9" height="11" rx="2" fill="#f8c060" stroke="#e08a10"/><ellipse cx="5" cy="2.5" rx="4.5" ry="2" fill="#ffe8b0" stroke="#e08a10"/><rect x="3" y="4" width="2" height="7" fill="#ffe8b0" opacity="0.7"/></svg>
<div class="t" style="left:49px;top:940px;font-size:11px;line-height:11px;color:#000;font-weight:400;letter-spacing:-0.2px">Test_Extended</div>
<svg style="left:9px;top:75px" width="15" height="16" viewBox="0 0 15 16"><rect x="0.5" y="1.5" width="7" height="9" rx="2" fill="#7aa2f0" stroke="#2f50d0"/><ellipse cx="4" cy="2.5" rx="3.5" ry="1.5" fill="#d0e0ff" stroke="#2f50d0"/><rect x="6.5" y="3.5" width="7" height="9" rx="2" fill="#7aa2f0" stroke="#2f50d0"/><ellipse cx="10" cy="4.5" rx="3.5" ry="1.5" fill="#d0e0ff" stroke="#2f50d0"/><rect x="3.5" y="6.5" width="7" height="9" rx="2" fill="#7aa2f0" stroke="#2f50d0"/><ellipse cx="7" cy="7.5" rx="3.5" ry="1.5" fill="#d0e0ff" stroke="#2f50d0"/></svg>
<div class="t" style="left:27px;top:79px;font-size:11px;line-height:11px;color:#000;font-weight:400;letter-spacing:-0.25px">Bibliotheks-Katalog</div>
<svg style="left:126px;top:78px" width="11" height="11" viewBox="0 0 11 11"><path d="M0.5 0.5 H3.5 L5 2 L6.5 0.5 H9.5 V3.5 L8 5 L9.5 6.5 V9.5 H6.5 L5 8 L3.5 9.5 H0.5 V6.5 L2 5 L0.5 3.5 Z" fill="#fff" stroke="#303030" stroke-width="0.95" stroke-linejoin="miter"/></svg>
<svg style="left:174px;top:77px" width="17" height="15" viewBox="0 0 17 15"><path d="M0.5 3.5 H5.5 M3.5 1.5 L5.5 3.5 L3.5 5.5 M0.5 12.5 H5.5 M3.5 10.5 L5.5 12.5 L3.5 14.5" stroke="#4a5a80" fill="none"/><path d="M6.5 1 V6 M6.5 10 V15" stroke="#304070"/><path d="M3.5 6.5 H9.5 V4.5 L13.5 8 L9.5 11.5 V9.5 H3.5 Z" fill="#fff6c0" stroke="#d09a10"/><path d="M5 8 H10" stroke="#f0c030"/><rect x="10.5" y="0.5" width="5" height="2.5" fill="#fff" stroke="#111"/></svg>
<div style="left:194px;top:72px;width:24px;height:22px;box-sizing:border-box;border-left:1px solid #808080;border-top:1px solid #808080;border-right:1px solid #fff;border-bottom:1px solid #fff;background:repeating-conic-gradient(#e8e6e0 0 25%,#d6d5cd 0 50%) 0 0/2px 2px"></div>
<svg style="left:198px;top:76px" width="17" height="15" viewBox="0 0 17 15"><path d="M0.5 3.5 H5.5 M3.5 1.5 L5.5 3.5 L3.5 5.5 M0.5 12.5 H5.5 M3.5 10.5 L5.5 12.5 L3.5 14.5" stroke="#4a5a80" fill="none"/><path d="M6.5 1 V6 M6.5 10 V15" stroke="#304070"/><path d="M3.5 6.5 H9.5 V4.5 L13.5 8 L9.5 11.5 V9.5 H3.5 Z" fill="#fff6c0" stroke="#d09a10"/><path d="M5 8 H10" stroke="#f0c030"/></svg>
<div style="left:221px;top:76px;width:1px;height:16px;background:#808080"></div>
<div style="left:222px;top:76px;width:1px;height:16px;background:#fff"></div>
<svg style="left:232px;top:76px" width="12" height="15" viewBox="0 0 12 15"><rect x="1.5" y="2.5" width="8" height="11" rx="2" fill="#7aa2f0" stroke="#2f50d0"/><path d="M8 0 V5 M5.5 2.5 H10.5" stroke="#fff" stroke-width="1.2"/></svg>
<div style="left:253px;top:76px;width:1px;height:16px;background:#808080"></div>
<div style="left:254px;top:76px;width:1px;height:16px;background:#fff"></div>
<svg style="left:263px;top:76px" width="15" height="15" viewBox="0 0 15 15"><rect x="1.5" y="1.5" width="10" height="10" fill="#e8f0ff" stroke="#8090c0"/><rect x="3.5" y="3.5" width="10" height="10" fill="#f0f6ff" stroke="#5070b0"/><path d="M5 8.5 H12" stroke="#1a3a90" stroke-width="1.5"/></svg>
<svg style="left:285px;top:74px" width="18" height="18" viewBox="0 0 18 18"><path d="M1 5 L6 1 V3 H13 V7 H6 V9 Z" fill="#ffe080" stroke="#d09010"/><path d="M17 12 L12 8 V10 H5 V14 H12 V16 Z" fill="#ffe080" stroke="#d09010"/></svg>
<svg style="left:310px;top:76px" width="11" height="6" viewBox="0 0 11 6"><path d="M0.5 0.5 L10.5 0.5 L5.5 5.5 Z" fill="#fff" stroke="#333"/></svg>
<div style="left:329px;top:77px;width:10px;height:4px;box-sizing:border-box;border:1px solid #333;background:#fff"></div>
<div style="left:347px;top:76px;width:10px;height:10px;box-sizing:border-box;border:1px solid #333;border-top-width:2px;background:#fff"></div>
<svg style="left:9px;top:686px" width="15" height="16" viewBox="0 0 15 16"><rect x="0.5" y="1.5" width="7" height="9" rx="2" fill="#f8c060" stroke="#e08a10"/><ellipse cx="4" cy="2.5" rx="3.5" ry="1.5" fill="#ffe8b0" stroke="#e08a10"/><rect x="6.5" y="3.5" width="7" height="9" rx="2" fill="#f8c060" stroke="#e08a10"/><ellipse cx="10" cy="4.5" rx="3.5" ry="1.5" fill="#ffe8b0" stroke="#e08a10"/><rect x="3.5" y="6.5" width="7" height="9" rx="2" fill="#f8c060" stroke="#e08a10"/><ellipse cx="7" cy="7.5" rx="3.5" ry="1.5" fill="#ffe8b0" stroke="#e08a10"/></svg>
<div class="t" style="left:27px;top:690px;font-size:11px;line-height:11px;color:#000;font-weight:400;letter-spacing:-0.25px">Projekt-Katalog</div>
<svg style="left:110px;top:689px" width="11" height="11" viewBox="0 0 11 11"><path d="M0.5 0.5 H3.5 L5 2 L6.5 0.5 H9.5 V3.5 L8 5 L9.5 6.5 V9.5 H6.5 L5 8 L3.5 9.5 H0.5 V6.5 L2 5 L0.5 3.5 Z" fill="#fff" stroke="#303030" stroke-width="0.95" stroke-linejoin="miter"/></svg>
<div style="left:329px;top:688px;width:10px;height:4px;box-sizing:border-box;border:1px solid #333;background:#fff"></div>
<div style="left:347px;top:687px;width:10px;height:10px;box-sizing:border-box;border:1px solid #333;border-top-width:2px;background:#fff"></div>
<svg style="left:186px;top:711px" width="17" height="15" viewBox="0 0 17 15"><path d="M0.5 3.5 H5.5 M3.5 1.5 L5.5 3.5 L3.5 5.5 M0.5 12.5 H5.5 M3.5 10.5 L5.5 12.5 L3.5 14.5" stroke="#4a5a80" fill="none"/><path d="M6.5 1 V6 M6.5 10 V15" stroke="#304070"/><path d="M3.5 6.5 H9.5 V4.5 L13.5 8 L9.5 11.5 V9.5 H3.5 Z" fill="#fff6c0" stroke="#d09a10"/><path d="M5 8 H10" stroke="#f0c030"/><rect x="10.5" y="0.5" width="5" height="2.5" fill="#fff" stroke="#111"/></svg>
<div style="left:206px;top:707px;width:24px;height:22px;box-sizing:border-box;border-left:1px solid #808080;border-top:1px solid #808080;border-right:1px solid #fff;border-bottom:1px solid #fff;background:repeating-conic-gradient(#e8e6e0 0 25%,#d6d5cd 0 50%) 0 0/2px 2px"></div>
<svg style="left:210px;top:711px" width="17" height="15" viewBox="0 0 17 15"><path d="M0.5 3.5 H5.5 M3.5 1.5 L5.5 3.5 L3.5 5.5 M0.5 12.5 H5.5 M3.5 10.5 L5.5 12.5 L3.5 14.5" stroke="#4a5a80" fill="none"/><path d="M6.5 1 V6 M6.5 10 V15" stroke="#304070"/><path d="M3.5 6.5 H9.5 V4.5 L13.5 8 L9.5 11.5 V9.5 H3.5 Z" fill="#fff6c0" stroke="#d09a10"/><path d="M5 8 H10" stroke="#f0c030"/></svg>
<div style="left:233px;top:710px;width:1px;height:18px;background:#808080"></div>
<div style="left:234px;top:710px;width:1px;height:18px;background:#fff"></div>
<svg style="left:242px;top:711px" width="14" height="15" viewBox="0 0 14 15"><path d="M4.5 3.5 L9.5 3.5 L11.5 5.5 L11.5 13.5 L4.5 13.5 Z" fill="#e8e8e8" stroke="#909090"/><path d="M8 0.5 L11 3 L9.5 3 L9.5 6" stroke="#909090" fill="none"/><text x="1" y="13" font-family="Liberation Sans" font-size="8" fill="#808080">P</text></svg>
<svg style="left:267px;top:711px" width="12" height="15" viewBox="0 0 12 15"><rect x="1.5" y="3.5" width="8" height="11" rx="2" fill="#f8b040" stroke="#e08a10"/><ellipse cx="5.5" cy="4.5" rx="4" ry="1.5" fill="#ffe0a0" stroke="#e08a10"/><path d="M7.5 0.5 V5.5 M5 3 H10" stroke="#e08a10" stroke-width="1.3"/></svg>
<div style="left:290px;top:710px;width:1px;height:18px;background:#808080"></div>
<div style="left:291px;top:710px;width:1px;height:18px;background:#fff"></div>
<svg style="left:300px;top:711px" width="15" height="15" viewBox="0 0 15 15"><rect x="1.5" y="1.5" width="10" height="10" fill="#e8f0ff" stroke="#8090c0"/><rect x="3.5" y="3.5" width="10" height="10" fill="#f0f6ff" stroke="#5070b0"/><path d="M5 8.5 H12" stroke="#1a3a90" stroke-width="1.5"/></svg>
<svg style="left:321px;top:709px" width="18" height="18" viewBox="0 0 18 18"><path d="M1 5 L6 1 V3 H13 V7 H6 V9 Z" fill="#ffe080" stroke="#d09010"/><path d="M17 12 L12 8 V10 H5 V14 H12 V16 Z" fill="#ffe080" stroke="#d09010"/></svg>
<svg style="left:346px;top:711px" width="11" height="6" viewBox="0 0 11 6"><path d="M0.5 0.5 L10.5 0.5 L5.5 5.5 Z" fill="#fff" stroke="#333"/></svg>
<div style="left:368px;top:95px;width:1547px;height:2px;background:#9ca6cf"></div>
<div style="left:368px;top:95px;width:2px;height:713px;background:#9ca6cf"></div>
<div style="left:1913px;top:95px;width:2px;height:713px;background:#9ca6cf"></div>
<div style="left:368px;top:806px;width:1547px;height:2px;background:#9ca6cf"></div>
<svg style="left:371px;top:75px" width="16" height="17" viewBox="0 0 16 17"><path d="M0.75 3.75 L3.75 0.75 L12.25 0.75 L12.25 11.25 L9.25 14.25 L0.75 14.25 Z" fill="#c6d2ec" stroke="#000" stroke-width="1.5"/><path d="M1 3.75 L9.25 3.75 L12 1 M9.25 3.75 L9.25 14" fill="none" stroke="#000" stroke-width="1.3"/><path d="M2 2.9 L4 1.5 L11 1.5 L9 2.9 Z" fill="#e4ecf8"/><rect x="3" y="7" width="1" height="1" fill="#d05050"/><rect x="5" y="6" width="1.2" height="1.2" fill="#30a040"/><rect x="7" y="6" width="1.2" height="1.2" fill="#203080"/><rect x="3" y="9" width="1" height="1" fill="#5080d0"/><rect x="5" y="8" width="1.2" height="1.2" fill="#c05050"/><rect x="7" y="8" width="1.2" height="1.2" fill="#203080"/><path d="M2 16 L4.5 11 L7 16 Z" fill="#ffb020" stroke="#f08000" stroke-width="0.8"/></svg>
<div class="t" style="left:390px;top:79px;font-size:11px;line-height:11px;color:#000;font-weight:400;letter-spacing:-0.25px">Komplettschrank</div>
<svg style="left:478px;top:78px" width="11" height="11" viewBox="0 0 11 11"><path d="M0.5 0.5 H3.5 L5 2 L6.5 0.5 H9.5 V3.5 L8 5 L9.5 6.5 V9.5 H6.5 L5 8 L3.5 9.5 H0.5 V6.5 L2 5 L0.5 3.5 Z" fill="#fff" stroke="#303030" stroke-width="0.95" stroke-linejoin="miter"/></svg>
<div style="left:1881px;top:76px;width:10px;height:4px;box-sizing:border-box;border:1px solid #333;background:#fff"></div>
<div style="left:1899px;top:76px;width:10px;height:10px;box-sizing:border-box;border:1px solid #333;border-top-width:2px;background:#fff"></div>
<div style="left:374px;top:102px;width:465px;height:57px;background:linear-gradient(to right,#fcc674 0%,#fdd08a 20%,#fdd9a2 38%,#fee3ba 52%,#feecd2 66%,#fff5e6 80%,#fffcf6 92%,#fff 100%)"></div>
<svg style="left:384px;top:107px" width="13" height="15" viewBox="0 0 13 15"><path d="M0.75 3.75 L3.75 0.75 L12.25 0.75 L12.25 11.25 L9.25 14.25 L0.75 14.25 Z" fill="#c6d2ec" stroke="#000" stroke-width="1.5"/><path d="M1 3.75 L9.25 3.75 L12 1 M9.25 3.75 L9.25 14" fill="none" stroke="#000" stroke-width="1.3"/><path d="M2 2.9 L4 1.5 L11 1.5 L9 2.9 Z" fill="#e4ecf8"/><rect x="3" y="7" width="1" height="1" fill="#d05050"/><rect x="5" y="6" width="1.2" height="1.2" fill="#30a040"/><rect x="7" y="6" width="1.2" height="1.2" fill="#203080"/><rect x="3" y="9" width="1" height="1" fill="#5080d0"/><rect x="5" y="8" width="1.2" height="1.2" fill="#c05050"/><rect x="7" y="8" width="1.2" height="1.2" fill="#203080"/></svg>
<div class="t" style="left:402px;top:110px;font-size:11px;line-height:11px;color:#000;font-weight:400;letter-spacing:-0.25px">Funktionseinheit</div>
<div class="t" style="left:378px;top:129px;font-size:11px;line-height:11px;color:#000;font-weight:700;letter-spacing:0.5px">Komplettschrank</div>
<div class="t" style="left:378px;top:145px;font-size:11px;line-height:11px;color:#000;font-weight:400;letter-spacing:-0.25px">(Komplettschrank)</div>
<div style="left:374px;top:159px;width:464px;height:207px;box-sizing:border-box;border-top:1px solid #808080;border-left:1px solid #808080;border-right:1px solid #fff;border-bottom:1px solid #fff"></div>
<div style="left:375px;top:160px;width:462px;height:205px;box-sizing:border-box;border-top:1px solid #404040;border-left:1px solid #404040;border-right:1px solid #d6d5cd;border-bottom:1px solid #d6d5cd;background:#fefee8"></div>
<svg style="left:383px;top:164px" width="11" height="11" viewBox="0 0 11 11"><rect x="0" y="0" width="3" height="3" fill="#4a6ab0"/><rect x="0" y="4" width="3" height="3" fill="#4a6ab0"/><rect x="0" y="8" width="3" height="3" fill="#4a6ab0"/><path d="M4 1.5 H11 M4 5.5 H11 M4 9.5 H11" stroke="#6070c0"/></svg>
<div class="t" style="left:398px;top:165px;font-size:11px;line-height:11px;color:#000;font-weight:400;letter-spacing:-0.15px">Attribute</div>
<svg style="left:384px;top:181px" width="9" height="9" viewBox="0 0 9 9"><circle cx="4.5" cy="4.5" r="3.8" fill="#80c080" stroke="#20a040" stroke-width="1.2"/></svg>
<div class="t" style="left:398px;top:182px;font-size:11px;line-height:11px;color:#000;font-weight:400;letter-spacing:-0.15px">Parameter</div>
<svg style="left:382px;top:196px" width="14" height="14" viewBox="0 0 14 14"><path d="M3.5 0.5 H10 L12.5 3 V13.5 H3.5 Z" fill="#f4f8ff" stroke="#b08a40"/><path d="M5.5 4 H11 M5.5 6.5 H11 M5.5 9 H11 M7 11.5 H11" stroke="#5a7ad0"/><path d="M1 4 L7 10" stroke="#e8c060" stroke-width="2.6" stroke-linecap="round"/><path d="M1 4 L7 10" stroke="#a07020" stroke-width="0.6"/><path d="M6.5 9.5 L8 11.5 L5.5 11 Z" fill="#303030"/></svg>
<div class="t" style="left:398px;top:199px;font-size:11px;line-height:11px;color:#000;font-weight:400;letter-spacing:-0.15px">Notizen</div>
<svg style="left:382px;top:214px" width="14" height="12" viewBox="0 0 14 12"><rect x="0.5" y="0.5" width="13" height="11" fill="#fff" stroke="#6070a0"/><rect x="1" y="1" width="12" height="2" fill="#8aa0d0"/><path d="M1 5.5 H13 M1 8.5 H13 M4.5 3 V11" stroke="#a0b0d0"/></svg>
<div class="t" style="left:398px;top:216px;font-size:11px;line-height:11px;color:#000;font-weight:400;letter-spacing:-0.15px">&#220;bergeordnete Komponenten</div>
<svg style="left:381px;top:231px" width="15" height="12" viewBox="0 0 15 12"><path d="M0.5 1.6 H4.5 M0.5 5.4 H4.5" stroke="#222" stroke-width="1.3" stroke-linecap="round"/><ellipse cx="2.9" cy="9.6" rx="2.4" ry="1.2" fill="#c0c0c0" stroke="#111" stroke-width="1.1"/><ellipse cx="10.2" cy="1.6" rx="3.6" ry="1.2" fill="#fff" stroke="#111" stroke-width="1.1"/><ellipse cx="10.2" cy="5.5" rx="3.6" ry="1.2" fill="#fff" stroke="#111" stroke-width="1.1"/><ellipse cx="10.6" cy="9.6" rx="2.8" ry="1.2" fill="#c0c0c0" stroke="#111" stroke-width="1.1"/></svg>
<div class="t" style="left:398px;top:233px;font-size:11px;line-height:11px;color:#000;font-weight:400;letter-spacing:-0.15px">0.Projektdaten</div>
<svg style="left:381px;top:248px" width="15" height="12" viewBox="0 0 15 12"><path d="M0.5 1.6 H4.5 M0.5 5.4 H4.5" stroke="#222" stroke-width="1.3" stroke-linecap="round"/><ellipse cx="2.9" cy="9.6" rx="2.4" ry="1.2" fill="#c0c0c0" stroke="#111" stroke-width="1.1"/><ellipse cx="10.2" cy="1.6" rx="3.6" ry="1.2" fill="#fff" stroke="#111" stroke-width="1.1"/><ellipse cx="10.2" cy="5.5" rx="3.6" ry="1.2" fill="#fff" stroke="#111" stroke-width="1.1"/><ellipse cx="10.6" cy="9.6" rx="2.8" ry="1.2" fill="#c0c0c0" stroke="#111" stroke-width="1.1"/></svg>
<div class="t" style="left:398px;top:250px;font-size:11px;line-height:11px;color:#000;font-weight:400;letter-spacing:-0.15px">1.Schrank</div>
<svg style="left:381px;top:265px" width="15" height="12" viewBox="0 0 15 12"><path d="M0.5 1.6 H4.5 M0.5 5.4 H4.5" stroke="#222" stroke-width="1.3" stroke-linecap="round"/><ellipse cx="2.9" cy="9.6" rx="2.4" ry="1.2" fill="#c0c0c0" stroke="#111" stroke-width="1.1"/><ellipse cx="10.2" cy="1.6" rx="3.6" ry="1.2" fill="#fff" stroke="#111" stroke-width="1.1"/><ellipse cx="10.2" cy="5.5" rx="3.6" ry="1.2" fill="#fff" stroke="#111" stroke-width="1.1"/><ellipse cx="10.6" cy="9.6" rx="2.8" ry="1.2" fill="#c0c0c0" stroke="#111" stroke-width="1.1"/></svg>
<div class="t" style="left:398px;top:267px;font-size:11px;line-height:11px;color:#000;font-weight:400;letter-spacing:-0.15px">2.Antriebskonfiguration</div>
<svg style="left:381px;top:282px" width="15" height="12" viewBox="0 0 15 12"><path d="M0.5 1.6 H4.5 M0.5 5.4 H4.5" stroke="#222" stroke-width="1.3" stroke-linecap="round"/><ellipse cx="2.9" cy="9.6" rx="2.4" ry="1.2" fill="#c0c0c0" stroke="#111" stroke-width="1.1"/><ellipse cx="10.2" cy="1.6" rx="3.6" ry="1.2" fill="#fff" stroke="#111" stroke-width="1.1"/><ellipse cx="10.2" cy="5.5" rx="3.6" ry="1.2" fill="#fff" stroke="#111" stroke-width="1.1"/><ellipse cx="10.6" cy="9.6" rx="2.8" ry="1.2" fill="#c0c0c0" stroke="#111" stroke-width="1.1"/></svg>
<div class="t" style="left:398px;top:284px;font-size:11px;line-height:11px;color:#000;font-weight:400;letter-spacing:-0.15px">3.PC-Steckplatz</div>
<svg style="left:381px;top:299px" width="15" height="12" viewBox="0 0 15 12"><path d="M0.5 1.6 H4.5 M0.5 5.4 H4.5" stroke="#222" stroke-width="1.3" stroke-linecap="round"/><ellipse cx="2.9" cy="9.6" rx="2.4" ry="1.2" fill="#c0c0c0" stroke="#111" stroke-width="1.1"/><ellipse cx="10.2" cy="1.6" rx="3.6" ry="1.2" fill="#fff" stroke="#111" stroke-width="1.1"/><ellipse cx="10.2" cy="5.5" rx="3.6" ry="1.2" fill="#fff" stroke="#111" stroke-width="1.1"/><ellipse cx="10.6" cy="9.6" rx="2.8" ry="1.2" fill="#c0c0c0" stroke="#111" stroke-width="1.1"/></svg>
<div class="t" style="left:398px;top:301px;font-size:11px;line-height:11px;color:#000;font-weight:400;letter-spacing:-0.15px">4.Schnittstelle</div>
<svg style="left:381px;top:316px" width="15" height="12" viewBox="0 0 15 12"><path d="M0.5 1.6 H4.5 M0.5 5.4 H4.5" stroke="#222" stroke-width="1.3" stroke-linecap="round"/><ellipse cx="2.9" cy="9.6" rx="2.4" ry="1.2" fill="#c0c0c0" stroke="#111" stroke-width="1.1"/><ellipse cx="10.2" cy="1.6" rx="3.6" ry="1.2" fill="#fff" stroke="#111" stroke-width="1.1"/><ellipse cx="10.2" cy="5.5" rx="3.6" ry="1.2" fill="#fff" stroke="#111" stroke-width="1.1"/><ellipse cx="10.6" cy="9.6" rx="2.8" ry="1.2" fill="#c0c0c0" stroke="#111" stroke-width="1.1"/></svg>
<div class="t" style="left:398px;top:318px;font-size:11px;line-height:11px;color:#000;font-weight:400;letter-spacing:-0.15px">5.Zubeh&#246;r</div>
<svg style="left:381px;top:333px" width="15" height="12" viewBox="0 0 15 12"><path d="M0.5 1.6 H4.5 M0.5 5.4 H4.5" stroke="#222" stroke-width="1.3" stroke-linecap="round"/><ellipse cx="2.9" cy="9.6" rx="2.4" ry="1.2" fill="#c0c0c0" stroke="#111" stroke-width="1.1"/><ellipse cx="10.2" cy="1.6" rx="3.6" ry="1.2" fill="#fff" stroke="#111" stroke-width="1.1"/><ellipse cx="10.2" cy="5.5" rx="3.6" ry="1.2" fill="#fff" stroke="#111" stroke-width="1.1"/><ellipse cx="10.6" cy="9.6" rx="2.8" ry="1.2" fill="#c0c0c0" stroke="#111" stroke-width="1.1"/></svg>
<div class="t" style="left:398px;top:335px;font-size:11px;line-height:11px;color:#000;font-weight:400;letter-spacing:-0.15px">6.Ergebnis</div>
<div style="left:843px;top:97px;width:1px;height:709px;background:#404040"></div>
<div style="left:843px;top:97px;width:5px;height:1px;background:#404040"></div>
<div style="left:848px;top:97px;width:1px;height:709px;background:#ffffff"></div>
<svg style="left:858px;top:106px" width="16" height="15" viewBox="0 0 16 15"><rect x="1.5" y="4.5" width="10" height="9" fill="#f0f6ff" stroke="#8090c0"/><rect x="1" y="4" width="11" height="2" fill="#4a80d8"/><path d="M8 8 L14 2" stroke="#1a9a2a" stroke-width="3"/><path d="M6 10 L9 7" stroke="#203080"/></svg>
<div style="left:882px;top:102px;width:109px;height:22px;background:#c9c9c9"></div>
<div style="left:991px;top:102px;width:120px;height:22px;background:#cdcdcd"></div>
<div style="left:1111px;top:102px;width:121px;height:22px;background:#d5d5d5"></div>
<div style="left:1232px;top:102px;width:121px;height:22px;background:#dddddd"></div>
<div style="left:1353px;top:102px;width:120px;height:22px;background:#e5e5e5"></div>
<div style="left:1473px;top:102px;width:120px;height:22px;background:#ececec"></div>
<div style="left:1593px;top:102px;width:120px;height:22px;background:#f3f3f3"></div>
<div style="left:1713px;top:102px;width:121px;height:22px;background:#ffffff"></div>
<svg style="left:893px;top:107px" width="15" height="12" viewBox="0 0 15 12"><path d="M0.5 1.6 H4.5 M0.5 5.4 H4.5" stroke="#222" stroke-width="1.3" stroke-linecap="round"/><ellipse cx="2.9" cy="9.6" rx="2.4" ry="1.2" fill="#c0c0c0" stroke="#111" stroke-width="1.1"/><ellipse cx="10.2" cy="1.6" rx="3.6" ry="1.2" fill="#fff" stroke="#111" stroke-width="1.1"/><ellipse cx="10.2" cy="5.5" rx="3.6" ry="1.2" fill="#fff" stroke="#111" stroke-width="1.1"/><ellipse cx="10.6" cy="9.6" rx="2.8" ry="1.2" fill="#c0c0c0" stroke="#111" stroke-width="1.1"/></svg>
<div class="t" style="left:909px;top:108px;font-size:11px;line-height:11px;color:#000;font-weight:400;letter-spacing:-0.25px">0.Projektdaten</div>
<svg style="left:1843px;top:105px" width="14" height="16" viewBox="0 0 14 16"><path d="M4.5 1.5 H9.5 V8.5 H12.5 L7 14.5 L1.5 8.5 H4.5 Z" fill="none" stroke="#808080"/></svg>
<svg style="left:1866px;top:105px" width="14" height="16" viewBox="0 0 14 16"><path d="M4.5 14.5 H9.5 V7.5 H12.5 L7 1.5 L1.5 7.5 H4.5 Z" fill="none" stroke="#808080"/></svg>
<svg style="left:1892px;top:110px" width="9" height="8" viewBox="0 0 9 8"><path d="M0.5 0.5 L8.5 7.5 M8.5 0.5 L0.5 7.5" stroke="#000" stroke-width="1.3"/></svg>
<div style="left:854px;top:126px;width:1055px;height:675px;background:#fff"></div>
<div style="left:889px;top:142px;width:707px;height:603px;background:#bfd4ee"></div>
<div class="t" style="left:913px;top:164px;font-size:16px;line-height:16px;color:#000;font-weight:700;">0. Datenerfassung</div>
<div class="t" style="left:922px;top:210px;font-size:13px;line-height:13px;color:#e0680a;font-weight:400;letter-spacing:-0.15px">Datenerfassung</div>
<div class="t" style="left:1027px;top:210px;font-size:13px;line-height:13px;color:#7a7a7a;font-weight:700;text-decoration:underline;text-underline-offset:1px">Schrank</div>
<div class="t" style="left:1094px;top:210px;font-size:13px;line-height:13px;color:#7a7a7a;font-weight:700;text-decoration:underline;text-underline-offset:1px">Antriebskonfiguration</div>
<div class="t" style="left:1245px;top:210px;font-size:13px;line-height:13px;color:#7a7a7a;font-weight:700;text-decoration:underline;text-underline-offset:1px">PC-Steckplatz</div>
<div class="t" style="left:1348px;top:210px;font-size:13px;line-height:13px;color:#7a7a7a;font-weight:700;text-decoration:underline;text-underline-offset:1px">Schnittstelle</div>
<div class="t" style="left:1441px;top:210px;font-size:13px;line-height:13px;color:#7a7a7a;font-weight:700;text-decoration:underline;text-underline-offset:1px">Zubeh&#246;r</div>
<div class="t" style="left:1508px;top:210px;font-size:13px;line-height:13px;color:#7a7a7a;font-weight:700;text-decoration:underline;text-underline-offset:1px">Ergebnis</div>
<div class="t" style="left:913px;top:253px;font-size:16px;line-height:16px;color:#000;font-weight:700;">0.1 Projektdaten</div>
<div class="t" style="left:922px;top:297px;font-size:13px;line-height:13px;color:#000;font-weight:400;letter-spacing:-0.1px">Konfiguration per Hand?</div>
<div class="t" style="left:922px;top:327px;font-size:13px;line-height:13px;color:#000;font-weight:400;letter-spacing:-0.1px">SAP Artikelnummer:</div>
<div class="t" style="left:922px;top:360px;font-size:13px;line-height:13px;color:#000;font-weight:400;letter-spacing:-0.1px">Projekt Kurzbezeichnung:</div>
<div class="t" style="left:922px;top:393px;font-size:13px;line-height:13px;color:#000;font-weight:400;letter-spacing:-0.1px">Projekttyp:</div>
<div class="t" style="left:922px;top:426px;font-size:13px;line-height:13px;color:#000;font-weight:400;letter-spacing:-0.1px">Projektname:</div>
<div class="t" style="left:922px;top:459px;font-size:13px;line-height:13px;color:#000;font-weight:400;letter-spacing:-0.1px">Kunde:</div>
<div class="t" style="left:922px;top:492px;font-size:13px;line-height:13px;color:#000;font-weight:400;letter-spacing:-0.1px">Installationsort:</div>
<div class="t" style="left:922px;top:525px;font-size:13px;line-height:13px;color:#000;font-weight:400;letter-spacing:-0.1px">Dokumentenversion:</div>
<div class="t" style="left:922px;top:560px;font-size:13px;line-height:13px;color:#000;font-weight:400;letter-spacing:-0.1px">Schaltplanlayout:</div>
<div class="t" style="left:922px;top:597px;font-size:13px;line-height:13px;color:#000;font-weight:400;letter-spacing:-0.1px">Symbolbibliothek:</div>
<div style="left:1118px;top:296px;width:13px;height:13px;box-sizing:border-box;border:2px solid #000;background:#fff"></div>
<div style="left:1118px;top:322px;width:82px;height:22px;box-sizing:border-box;border-top:1px solid #808080;border-left:1px solid #808080;border-right:1px solid #fff;border-bottom:1px solid #fff"></div>
<div style="left:1119px;top:323px;width:80px;height:20px;box-sizing:border-box;border-top:1px solid #404040;border-left:1px solid #404040;border-right:1px solid #d6d5cd;border-bottom:1px solid #d6d5cd;background:#fff"></div>
<div class="t" style="left:1123px;top:327px;font-size:13px;line-height:13px;color:#000;font-weight:400;letter-spacing:-0.2px">0011015880</div>
<div style="left:1118px;top:355px;width:287px;height:22px;box-sizing:border-box;border-top:1px solid #808080;border-left:1px solid #808080;border-right:1px solid #fff;border-bottom:1px solid #fff"></div>
<div style="left:1119px;top:356px;width:285px;height:20px;box-sizing:border-box;border-top:1px solid #404040;border-left:1px solid #404040;border-right:1px solid #d6d5cd;border-bottom:1px solid #d6d5cd;background:#fff"></div>
<div class="t" style="left:1123px;top:360px;font-size:13px;line-height:13px;color:#000;font-weight:400;letter-spacing:-0.2px">KRC4-NA SC4PA X11/X13 X66 X33 X42 TRAFO</div>
<div style="left:1118px;top:388px;width:46px;height:22px;box-sizing:border-box;border-top:1px solid #808080;border-left:1px solid #808080;border-right:1px solid #fff;border-bottom:1px solid #fff"></div>
<div style="left:1119px;top:389px;width:44px;height:20px;box-sizing:border-box;border-top:1px solid #404040;border-left:1px solid #404040;border-right:1px solid #d6d5cd;border-bottom:1px solid #d6d5cd;background:#fff"></div>
<div class="t" style="left:1123px;top:393px;font-size:13px;line-height:13px;color:#000;font-weight:400;letter-spacing:-0.2px">KRC4</div>
<div style="left:1118px;top:421px;width:76px;height:22px;box-sizing:border-box;border-top:1px solid #808080;border-left:1px solid #808080;border-right:1px solid #fff;border-bottom:1px solid #fff"></div>
<div style="left:1119px;top:422px;width:74px;height:20px;box-sizing:border-box;border-top:1px solid #404040;border-left:1px solid #404040;border-right:1px solid #d6d5cd;border-bottom:1px solid #d6d5cd;background:#fff"></div>
<div style="left:1118px;top:454px;width:76px;height:22px;box-sizing:border-box;border-top:1px solid #808080;border-left:1px solid #808080;border-right:1px solid #fff;border-bottom:1px solid #fff"></div>
<div style="left:1119px;top:455px;width:74px;height:20px;box-sizing:border-box;border-top:1px solid #404040;border-left:1px solid #404040;border-right:1px solid #d6d5cd;border-bottom:1px solid #d6d5cd;background:#fff"></div>
<div style="left:1118px;top:487px;width:76px;height:22px;box-sizing:border-box;border-top:1px solid #808080;border-left:1px solid #808080;border-right:1px solid #fff;border-bottom:1px solid #fff"></div>
<div style="left:1119px;top:488px;width:74px;height:20px;box-sizing:border-box;border-top:1px solid #404040;border-left:1px solid #404040;border-right:1px solid #d6d5cd;border-bottom:1px solid #d6d5cd;background:#fff"></div>
<div style="left:1118px;top:520px;width:26px;height:22px;box-sizing:border-box;border-top:1px solid #808080;border-left:1px solid #808080;border-right:1px solid #fff;border-bottom:1px solid #fff"></div>
<div style="left:1119px;top:521px;width:24px;height:20px;box-sizing:border-box;border-top:1px solid #404040;border-left:1px solid #404040;border-right:1px solid #d6d5cd;border-bottom:1px solid #d6d5cd;background:#fff"></div>
<div class="t" style="left:1123px;top:525px;font-size:13px;line-height:13px;color:#000;font-weight:400;letter-spacing:-0.2px">00</div>
<svg style="left:1124px;top:559px" width="12" height="12" viewBox="0 0 12 12"><circle cx="6" cy="6" r="5" fill="#fff"/><path d="M2.11 9.89 A5.5 5.5 0 0 1 9.89 2.11" fill="none" stroke="#808080"/><path d="M9.89 2.11 A5.5 5.5 0 0 1 2.11 9.89" fill="none" stroke="#ffffff"/><path d="M2.82 9.18 A4.5 4.5 0 0 1 9.18 2.82" fill="none" stroke="#404040"/><path d="M9.18 2.82 A4.5 4.5 0 0 1 2.82 9.18" fill="none" stroke="#d6d5cd"/><circle cx="6" cy="6" r="2" fill="#000"/></svg>
<div class="t" style="left:1141px;top:560px;font-size:13px;line-height:13px;color:#000;font-weight:400;">KUKA</div>
<svg style="left:1186px;top:559px" width="12" height="12" viewBox="0 0 12 12"><circle cx="6" cy="6" r="5" fill="#fff"/><path d="M2.11 9.89 A5.5 5.5 0 0 1 9.89 2.11" fill="none" stroke="#808080"/><path d="M9.89 2.11 A5.5 5.5 0 0 1 2.11 9.89" fill="none" stroke="#ffffff"/><path d="M2.82 9.18 A4.5 4.5 0 0 1 9.18 2.82" fill="none" stroke="#404040"/><path d="M9.18 2.82 A4.5 4.5 0 0 1 2.82 9.18" fill="none" stroke="#d6d5cd"/></svg>
<div class="t" style="left:1203px;top:560px;font-size:13px;line-height:13px;color:#000;font-weight:400;letter-spacing:-0.5px">VW</div>
<svg style="left:1124px;top:596px" width="12" height="12" viewBox="0 0 12 12"><circle cx="6" cy="6" r="5" fill="#fff"/><path d="M2.11 9.89 A5.5 5.5 0 0 1 9.89 2.11" fill="none" stroke="#808080"/><path d="M9.89 2.11 A5.5 5.5 0 0 1 2.11 9.89" fill="none" stroke="#ffffff"/><path d="M2.82 9.18 A4.5 4.5 0 0 1 9.18 2.82" fill="none" stroke="#404040"/><path d="M9.18 2.82 A4.5 4.5 0 0 1 2.82 9.18" fill="none" stroke="#d6d5cd"/></svg>
<div class="t" style="left:1141px;top:597px;font-size:13px;line-height:13px;color:#000;font-weight:400;">IEC</div>
<svg style="left:1171px;top:596px" width="12" height="12" viewBox="0 0 12 12"><circle cx="6" cy="6" r="5" fill="#fff"/><path d="M2.11 9.89 A5.5 5.5 0 0 1 9.89 2.11" fill="none" stroke="#808080"/><path d="M9.89 2.11 A5.5 5.5 0 0 1 2.11 9.89" fill="none" stroke="#ffffff"/><path d="M2.82 9.18 A4.5 4.5 0 0 1 9.18 2.82" fill="none" stroke="#404040"/><path d="M9.18 2.82 A4.5 4.5 0 0 1 2.82 9.18" fill="none" stroke="#d6d5cd"/><circle cx="6" cy="6" r="2" fill="#000"/></svg>
<div class="t" style="left:1188px;top:597px;font-size:13px;line-height:13px;color:#000;font-weight:400;">NFPA</div>
<div style="left:919px;top:683px;width:78px;height:26px;box-sizing:border-box;border:1px solid #000;background:#d6d5cd"></div>
<div style="left:920px;top:684px;width:76px;height:24px;box-sizing:border-box;border:1px solid #fff"></div>
<svg style="left:927px;top:689px" width="15" height="14" viewBox="0 0 15 14"><path d="M1.5 7 L7 1.5 V4.5 H13.5 V9.5 H7 V12.5 Z" fill="none" stroke="#7a7a7a" stroke-linejoin="round"/></svg>
<div class="t" style="left:949px;top:689px;font-size:14px;line-height:14px;color:#7a7a7a;font-weight:700;letter-spacing:-0.3px;text-shadow:1px 1px 0 #fff">zur&#252;ck</div>
<div style="left:1424px;top:683px;width:76px;height:26px;box-sizing:border-box;border:1px solid #000;background:#d6d5cd"></div>
<div style="left:1425px;top:684px;width:74px;height:24px;box-sizing:border-box;border:1px solid #fff"></div>
<svg style="left:1432px;top:689px" width="16" height="14" viewBox="0 0 16 14"><path d="M14.5 6.5 L8.5 0.5 V3.5 H1.5 V9.5 H8.5 V12.5 Z" fill="#fff4b0" stroke="#d0900a" stroke-linejoin="round"/></svg>
<div class="t" style="left:1454px;top:689px;font-size:14px;line-height:14px;color:#000;font-weight:700;letter-spacing:-0.2px">weiter</div>
<svg style="left:560px;top:812px" width="12" height="25" viewBox="0 0 12 25"><path d="M0 0.5 L5 0.5 Q9.5 0.5 9.5 5 L9.5 23" fill="none" stroke="#808080"/></svg>
<svg style="left:372px;top:816px" width="15" height="16" viewBox="0 0 15 16"><rect x="0.5" y="0.5" width="13" height="14" fill="#f8f8ff" stroke="#6a80c0"/><circle cx="5" cy="4.5" r="3" fill="#e02020"/><path d="M2 13 L5 8 L8 13 Z" fill="#f0b020"/><path d="M10 2 V13" stroke="#90a0d0"/></svg>
<div class="t" style="left:390px;top:820px;font-size:11px;line-height:11px;color:#000;font-weight:400;letter-spacing:-0.2px">Fehler</div>
<svg style="left:429px;top:819px" width="11" height="11" viewBox="0 0 11 11"><path d="M0.5 0.5 H3.5 L5 2 L6.5 0.5 H9.5 V3.5 L8 5 L9.5 6.5 V9.5 H6.5 L5 8 L3.5 9.5 H0.5 V6.5 L2 5 L0.5 3.5 Z" fill="#fff" stroke="#303030" stroke-width="0.95" stroke-linejoin="miter"/></svg>
<svg style="left:463px;top:815px" width="18" height="18" viewBox="0 0 18 18"><circle cx="5" cy="5" r="3.5" fill="none" stroke="#3050a0" stroke-width="1.4"/><circle cx="12" cy="5" r="3.5" fill="none" stroke="#3050a0" stroke-width="1.4"/><rect x="2.5" y="9.5" width="14" height="8" fill="#fff" stroke="#b0a040"/><text x="3" y="17" font-family="Liberation Sans" font-size="7" font-weight="700" fill="#2040a0">=(x)</text></svg>
<div class="t" style="left:484px;top:820px;font-size:11px;line-height:11px;color:#000;font-weight:400;letter-spacing:-0.25px">Formel-Inspektor</div>
<svg style="left:1862px;top:817px" width="11" height="6" viewBox="0 0 11 6"><path d="M0.5 0.5 L10.5 0.5 L5.5 5.5 Z" fill="#fff" stroke="#333"/></svg>
<div style="left:1881px;top:816px;width:10px;height:4px;box-sizing:border-box;border:1px solid #333;background:#fff"></div>
<div style="left:1899px;top:816px;width:10px;height:10px;box-sizing:border-box;border:1px solid #333;border-top-width:2px;background:#fff"></div>
<div class="t" style="left:370px;top:840px;font-size:11px;line-height:11px;color:#000;font-weight:400;letter-spacing:-0.2px">0 Elemente</div>
<div style="left:370px;top:852px;width:1543px;height:196px;background:#fff"></div>
<div style="left:370px;top:852px;width:1543px;height:1px;background:#808080"></div>
<div style="left:370px;top:853px;width:1543px;height:15px;background:#d6d5cd"></div>
<div style="left:370px;top:868px;width:1543px;height:2px;background:#404040"></div>
<div style="left:619px;top:853px;width:1px;height:15px;background:#404040"></div>
<div style="left:620px;top:853px;width:1px;height:15px;background:#ffffff"></div>
<div style="left:619px;top:870px;width:1px;height:177px;background:#d0d0d0"></div>
<div style="left:698px;top:853px;width:1px;height:15px;background:#404040"></div>
<div style="left:699px;top:853px;width:1px;height:15px;background:#ffffff"></div>
<div style="left:698px;top:870px;width:1px;height:177px;background:#d0d0d0"></div>
<div style="left:802px;top:853px;width:1px;height:15px;background:#404040"></div>
<div style="left:803px;top:853px;width:1px;height:15px;background:#ffffff"></div>
<div style="left:802px;top:870px;width:1px;height:177px;background:#d0d0d0"></div>
<div style="left:856px;top:853px;width:1px;height:15px;background:#404040"></div>
<div style="left:857px;top:853px;width:1px;height:15px;background:#ffffff"></div>
<div style="left:856px;top:870px;width:1px;height:177px;background:#d0d0d0"></div>
<div style="left:935px;top:853px;width:1px;height:15px;background:#404040"></div>
<div style="left:936px;top:853px;width:1px;height:15px;background:#ffffff"></div>
<div style="left:935px;top:870px;width:1px;height:177px;background:#d0d0d0"></div>
<div style="left:370px;top:853px;width:249px;height:1px;background:#fff"></div>
<div style="left:620px;top:853px;width:78px;height:1px;background:#fff"></div>
<div style="left:699px;top:853px;width:103px;height:1px;background:#fff"></div>
<div style="left:803px;top:853px;width:53px;height:1px;background:#fff"></div>
<div style="left:857px;top:853px;width:78px;height:1px;background:#fff"></div>
<div style="left:936px;top:853px;width:977px;height:1px;background:#fff"></div>
<div style="left:370px;top:853px;width:1px;height:15px;background:#fff"></div>
<div style="left:370px;top:885px;width:1543px;height:1px;background:#d0d0d0"></div>
<div style="left:370px;top:901px;width:1543px;height:1px;background:#d0d0d0"></div>
<div style="left:370px;top:917px;width:1543px;height:1px;background:#d0d0d0"></div>
<div style="left:370px;top:933px;width:1543px;height:1px;background:#d0d0d0"></div>
<div style="left:370px;top:949px;width:1543px;height:1px;background:#d0d0d0"></div>
<div style="left:370px;top:965px;width:1543px;height:1px;background:#d0d0d0"></div>
<div style="left:370px;top:981px;width:1543px;height:1px;background:#d0d0d0"></div>
<div style="left:370px;top:997px;width:1543px;height:1px;background:#d0d0d0"></div>
<div style="left:370px;top:1013px;width:1543px;height:1px;background:#d0d0d0"></div>
<div style="left:370px;top:1029px;width:1543px;height:1px;background:#d0d0d0"></div>
<div style="left:370px;top:1045px;width:1543px;height:1px;background:#d0d0d0"></div>
<div style="left:370px;top:1047px;width:1543px;height:2px;background:#d6d5cd"></div>
<div style="left:1913px;top:852px;width:2px;height:197px;background:#d6d5cd"></div>
<div class="t" style="left:376px;top:857px;font-size:11px;line-height:11px;color:#000;font-weight:400;letter-spacing:-0.2px">Beschreibung</div>
<div class="t" style="left:625px;top:857px;font-size:11px;line-height:11px;color:#000;font-weight:400;letter-spacing:-0.2px">Ressource</div>
<div class="t" style="left:704px;top:857px;font-size:11px;line-height:11px;color:#000;font-weight:400;letter-spacing:-0.2px">Pfad</div>
<div class="t" style="left:808px;top:857px;font-size:11px;line-height:11px;color:#000;font-weight:400;letter-spacing:-0.2px">Position</div>
<div class="t" style="left:862px;top:857px;font-size:11px;line-height:11px;color:#000;font-weight:400;letter-spacing:-0.2px">Typ</div>
<svg style="left:449px;top:858px" width="8" height="5" viewBox="0 0 8 5"><path d="M0 4.5 L4 0.5 L8 4.5 Z" fill="#a0a0a0"/></svg>
<div style="left:4px;top:1054px;width:2px;height:18px;background:#fff"></div>
<div style="left:6px;top:1054px;width:1px;height:18px;background:#707070"></div>
<div style="left:4px;top:1071px;width:3px;height:1px;background:#707070"></div>
<svg style="left:15px;top:1056px" width="16" height="16" viewBox="0 0 16 16"><rect x="0.5" y="3.5" width="6" height="11" fill="#fff" stroke="#808080"/><rect x="0.5" y="3.5" width="6" height="2" fill="#4080e0"/><path d="M11 0.5 L14.5 4 L11 7.5 L7.5 4 Z M11 2 V6 M9 4 H13" fill="none" stroke="#d0a000"/></svg>
<div style="left:1667px;top:1053px;width:2px;height:18px;background:#fff"></div>
<div style="left:1669px;top:1053px;width:1px;height:18px;background:#707070"></div>
<div style="left:1667px;top:1070px;width:3px;height:1px;background:#707070"></div></body></html>
